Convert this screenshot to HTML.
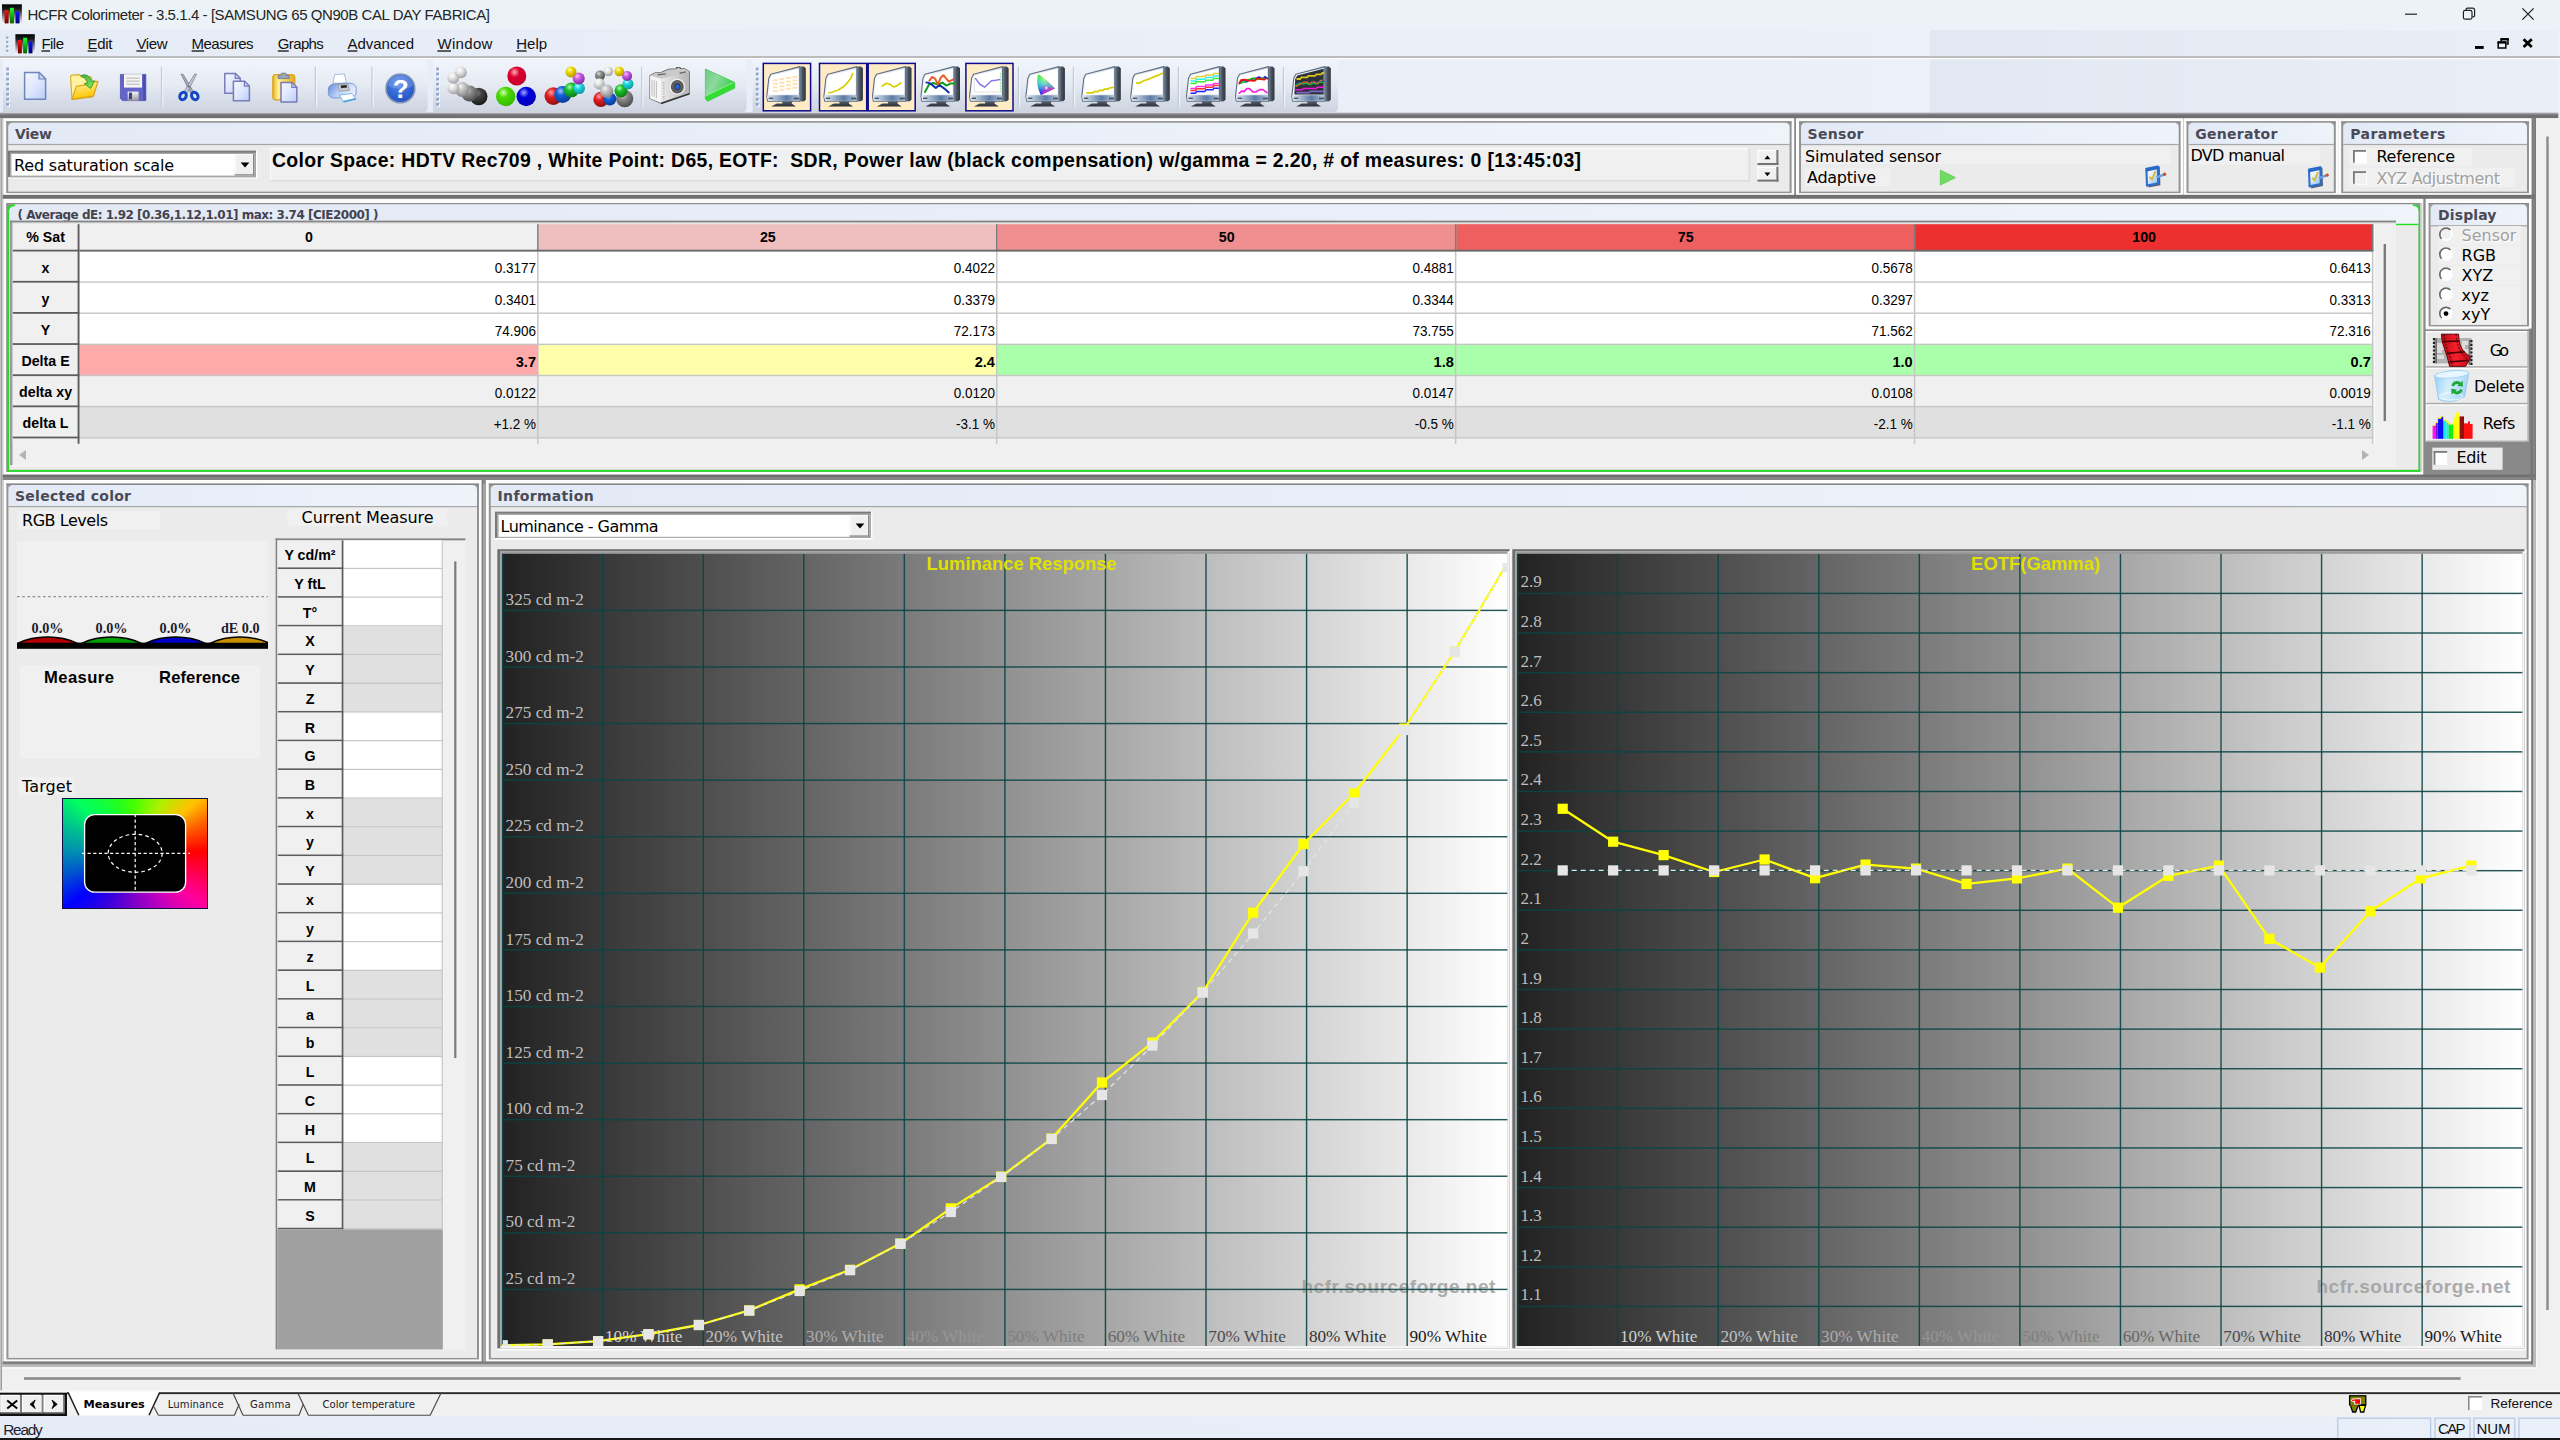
<!DOCTYPE html>
<html lang="en"><head><meta charset="utf-8"><title>HCFR Colorimeter - 3.5.1.4 - [SAMSUNG 65 QN90B CAL DAY FABRICA]</title>
<style>
html,body{margin:0;padding:0;background:#f0f0f0;}
body{width:2560px;height:1440px;overflow:hidden;position:relative;font-family:"Liberation Sans",sans-serif;}
#app{position:absolute;left:0;top:0;width:2560px;height:1440px;overflow:hidden;}
svg{position:absolute;left:0;top:0;}
text{white-space:pre;}
</style></head><body><div id="app">
<svg width="2560" height="1440" viewBox="0 0 2560 1440">
<defs>
<linearGradient id="hdr" x1="0" x2="1" y1="0" y2="0"><stop offset="0" stop-color="#e3eaf6"/><stop offset="1" stop-color="#eff4fb"/></linearGradient>
<linearGradient id="menubg" x1="0" x2="1" y1="0" y2="0"><stop offset="0" stop-color="#e6ecf6"/><stop offset="1" stop-color="#eef2f9"/></linearGradient>
<linearGradient id="menubg2" x1="0" x2="1" y1="0" y2="0"><stop offset="0" stop-color="#e2e8f1"/><stop offset="1" stop-color="#e9eef7"/></linearGradient>
<linearGradient id="tbg" x1="0" x2="0" y1="0" y2="1"><stop offset="0" stop-color="#f1f5fb"/><stop offset="0.45" stop-color="#e6ebf4"/><stop offset="1" stop-color="#cdd4e0"/></linearGradient>
<linearGradient id="topband" x1="0" x2="0" y1="0" y2="1" gradientUnits="userSpaceOnUse"><stop offset="0.0787" stop-color="#9a9da4"/><stop offset="0.0812" stop-color="#707070"/></linearGradient>
<clipPath id="clipRGB"><rect x="17" y="600" width="251" height="50"/></clipPath>
<linearGradient id="cg" x1="0" x2="1" y1="0" y2="0"><stop offset="0" stop-color="#222222"/><stop offset="1" stop-color="#ffffff"/></linearGradient>
<clipPath id="clipL"><rect x="502" y="553.8" width="1005.6" height="792.2"/></clipPath>
<clipPath id="clipR"><rect x="1517" y="553.8" width="1005.6" height="792.2"/></clipPath>
<linearGradient id="appbg" x1="0" x2="0" y1="0" y2="1"><stop offset="0" stop-color="#000"/><stop offset="0.25" stop-color="#1c1c1c"/><stop offset="1" stop-color="#ffffff"/></linearGradient>
<linearGradient id="barR" x1="0" x2="0" y1="0" y2="1"><stop offset="0" stop-color="#ff1010"/><stop offset="1" stop-color="#6a0000"/></linearGradient>
<linearGradient id="barG" x1="0" x2="0" y1="0" y2="1"><stop offset="0" stop-color="#20ff20"/><stop offset="1" stop-color="#006400"/></linearGradient>
<linearGradient id="barB" x1="0" x2="0" y1="0" y2="1"><stop offset="0" stop-color="#1010ff"/><stop offset="1" stop-color="#00007a"/></linearGradient>
<linearGradient id="pg" x1="0" y1="0" x2="1" y2="1"><stop offset="0" stop-color="#f6f8ff"/><stop offset="0.5" stop-color="#dfe7fd"/><stop offset="1" stop-color="#b9cdf8"/></linearGradient>
<linearGradient id="fold" x1="0" y1="0" x2="0.3" y2="1"><stop offset="0" stop-color="#fff6a8"/><stop offset="1" stop-color="#ffc400"/></linearGradient>
<linearGradient id="clipb" x1="0" y1="0" x2="1" y2="0"><stop offset="0" stop-color="#e8b030"/><stop offset="0.25" stop-color="#fff490"/><stop offset="1" stop-color="#e8a820"/></linearGradient>
<linearGradient id="garrow" x1="0" y1="0" x2="1" y2="1"><stop offset="0" stop-color="#3aa83a"/><stop offset="1" stop-color="#8cf060"/></linearGradient>
<linearGradient id="prn" x1="0" y1="0" x2="1" y2="0.4"><stop offset="0" stop-color="#5d86d6"/><stop offset="0.5" stop-color="#b9cdf6"/><stop offset="1" stop-color="#e6eefc"/></linearGradient>
<radialGradient id="helpg" cx="0.45" cy="0.3" r="0.8"><stop offset="0" stop-color="#5a8ae8"/><stop offset="0.6" stop-color="#2f63cf"/><stop offset="1" stop-color="#2450b8"/></radialGradient>
<linearGradient id="playg" x1="0" y1="0" x2="1" y2="0.5"><stop offset="0" stop-color="#66c882"/><stop offset="0.45" stop-color="#8edaa0"/><stop offset="1" stop-color="#3fd04f"/></linearGradient>
<linearGradient id="camf" x1="0" y1="0" x2="1" y2="0"><stop offset="0" stop-color="#ececec"/><stop offset="1" stop-color="#b4b4b4"/></linearGradient>
<linearGradient id="cam" x1="0" y1="0" x2="0" y2="1"><stop offset="0" stop-color="#f4f4f4"/><stop offset="1" stop-color="#9a9a9a"/></linearGradient>
<linearGradient id="cfgi" x1="0" y1="0" x2="0.8" y2="1"><stop offset="0" stop-color="#ffffff"/><stop offset="0.45" stop-color="#e6f2fd"/><stop offset="1" stop-color="#8cc4f6"/></linearGradient>
<radialGradient id="sR" cx="0.38" cy="0.3" r="0.75"><stop offset="0" stop-color="#ffb0b8"/><stop offset="0.35" stop-color="#dc0030"/><stop offset="1" stop-color="#c00028"/></radialGradient>
<radialGradient id="sG" cx="0.38" cy="0.3" r="0.75"><stop offset="0" stop-color="#d0ffb0"/><stop offset="0.35" stop-color="#48d800"/><stop offset="1" stop-color="#34b800"/></radialGradient>
<radialGradient id="sB" cx="0.38" cy="0.3" r="0.75"><stop offset="0" stop-color="#a0a8ff"/><stop offset="0.35" stop-color="#0000dc"/><stop offset="1" stop-color="#0000b4"/></radialGradient>
<radialGradient id="sW" cx="0.38" cy="0.3" r="0.75"><stop offset="0" stop-color="#ffffff"/><stop offset="0.35" stop-color="#e6e6e6"/><stop offset="1" stop-color="#9a9a9a"/></radialGradient>
<radialGradient id="sL" cx="0.38" cy="0.3" r="0.75"><stop offset="0" stop-color="#f4f4f4"/><stop offset="0.35" stop-color="#c6c6c6"/><stop offset="1" stop-color="#7e7e7e"/></radialGradient>
<radialGradient id="sK" cx="0.38" cy="0.3" r="0.75"><stop offset="0" stop-color="#8a8a8a"/><stop offset="0.35" stop-color="#444444"/><stop offset="1" stop-color="#141414"/></radialGradient>
<radialGradient id="sD" cx="0.38" cy="0.3" r="0.75"><stop offset="0" stop-color="#d8d8d8"/><stop offset="0.35" stop-color="#8a8a8a"/><stop offset="1" stop-color="#484848"/></radialGradient>
<radialGradient id="sY" cx="0.38" cy="0.3" r="0.75"><stop offset="0" stop-color="#ffffc0"/><stop offset="0.35" stop-color="#f0d800"/><stop offset="1" stop-color="#b09000"/></radialGradient>
<radialGradient id="sM" cx="0.38" cy="0.3" r="0.75"><stop offset="0" stop-color="#ffc0ff"/><stop offset="0.35" stop-color="#c860e0"/><stop offset="1" stop-color="#8020a0"/></radialGradient>
<radialGradient id="sC" cx="0.38" cy="0.3" r="0.75"><stop offset="0" stop-color="#c0ffff"/><stop offset="0.35" stop-color="#20d8e0"/><stop offset="1" stop-color="#109098"/></radialGradient>
<radialGradient id="sR2" cx="0.38" cy="0.3" r="0.75"><stop offset="0" stop-color="#ffa0a0"/><stop offset="0.35" stop-color="#e02020"/><stop offset="1" stop-color="#8a0c0c"/></radialGradient>
<radialGradient id="sB2" cx="0.38" cy="0.3" r="0.75"><stop offset="0" stop-color="#a0c0ff"/><stop offset="0.35" stop-color="#1060d8"/><stop offset="1" stop-color="#083890"/></radialGradient>
<radialGradient id="sG2" cx="0.38" cy="0.3" r="0.75"><stop offset="0" stop-color="#b0ffb0"/><stop offset="0.35" stop-color="#18c028"/><stop offset="1" stop-color="#0a7814"/></radialGradient>
<linearGradient id="mside" x1="0" x2="1"><stop offset="0" stop-color="#7f93ad"/><stop offset="0.45" stop-color="#4a5460"/><stop offset="1" stop-color="#2e343c"/></linearGradient>
<linearGradient id="mbez" x1="0" x2="1"><stop offset="0" stop-color="#dfe7f1"/><stop offset="0.25" stop-color="#a9bbd1"/><stop offset="0.6" stop-color="#5b7ba4"/><stop offset="1" stop-color="#b5c4d8"/></linearGradient>
<linearGradient id="mfront" x1="0" x2="1"><stop offset="0" stop-color="#f4f7fb"/><stop offset="1" stop-color="#cfd9e6"/></linearGradient>
<linearGradient id="mstand" x1="0" x2="0" y1="0" y2="1"><stop offset="0" stop-color="#5a6470"/><stop offset="1" stop-color="#2c3138"/></linearGradient>
<linearGradient id="cieg" x1="0" y1="0" x2="1" y2="0.6"><stop offset="0" stop-color="#20e020"/><stop offset="0.45" stop-color="#f0ff60"/><stop offset="1" stop-color="#ff1010"/></linearGradient>
<linearGradient id="cieb" x1="0.3" y1="1" x2="0.5" y2="0"><stop offset="0" stop-color="#1010ff"/><stop offset="0.55" stop-color="#30d0ff" stop-opacity="0.7"/><stop offset="1" stop-color="#30ff80" stop-opacity="0"/></linearGradient>
<radialGradient id="ciew" cx="0.55" cy="0.62" r="0.3"><stop offset="0" stop-color="#ffffff"/><stop offset="1" stop-color="#ffffff" stop-opacity="0"/></radialGradient>
<linearGradient id="bin" x1="0" x2="1" y1="0" y2="0.3"><stop offset="0" stop-color="#8ccdf6"/><stop offset="0.5" stop-color="#d6eefc"/><stop offset="1" stop-color="#a6d8f8"/></linearGradient>
<linearGradient id="redfilm" x1="0" x2="1"><stop offset="0" stop-color="#c00814"/><stop offset="0.5" stop-color="#f4202c"/><stop offset="1" stop-color="#c80c18"/></linearGradient>
</defs>
<!-- p1_chrome -->
<rect x="0" y="0" width="2560" height="1440" fill="#f0f0f0" />
<rect x="0" y="0" width="2560" height="29.3" fill="#ebf3f8" />
<rect x="0" y="29" width="2560" height="84.4" fill="url(#menubg)" />
<rect x="1930" y="30" width="628.5" height="83.4" fill="url(#menubg2)" />
<rect x="0" y="56" width="2560" height="2" fill="#bcbcbc" />
<rect x="0" y="58" width="2560" height="1.4" fill="#fbfcfe" />
<path d="M3 60.3 L423.6 60.3 Q427.6 60.3 427.6 64.3 L427.6 108 Q427.6 112 423.6 112 L3 112 Z" fill="url(#tbg)"/><rect x="7.2" y="68.6" width="2.8" height="2.8" fill="#fbfcfe" /><rect x="6.2" y="67.6" width="2.8" height="2.8" fill="#8ea7cb" /><rect x="7.2" y="73.65" width="2.8" height="2.8" fill="#fbfcfe" /><rect x="6.2" y="72.65" width="2.8" height="2.8" fill="#8ea7cb" /><rect x="7.2" y="78.7" width="2.8" height="2.8" fill="#fbfcfe" /><rect x="6.2" y="77.7" width="2.8" height="2.8" fill="#8ea7cb" /><rect x="7.2" y="83.75" width="2.8" height="2.8" fill="#fbfcfe" /><rect x="6.2" y="82.75" width="2.8" height="2.8" fill="#8ea7cb" /><rect x="7.2" y="88.8" width="2.8" height="2.8" fill="#fbfcfe" /><rect x="6.2" y="87.8" width="2.8" height="2.8" fill="#8ea7cb" /><rect x="7.2" y="93.85" width="2.8" height="2.8" fill="#fbfcfe" /><rect x="6.2" y="92.85" width="2.8" height="2.8" fill="#8ea7cb" /><rect x="7.2" y="98.9" width="2.8" height="2.8" fill="#fbfcfe" /><rect x="6.2" y="97.9" width="2.8" height="2.8" fill="#8ea7cb" /><rect x="7.2" y="103.95" width="2.8" height="2.8" fill="#fbfcfe" /><rect x="6.2" y="102.95" width="2.8" height="2.8" fill="#8ea7cb" />
<path d="M433 60.3 L742.6 60.3 Q746.6 60.3 746.6 64.3 L746.6 108 Q746.6 112 742.6 112 L433 112 Z" fill="url(#tbg)"/><rect x="437.2" y="68.6" width="2.8" height="2.8" fill="#fbfcfe" /><rect x="436.2" y="67.6" width="2.8" height="2.8" fill="#8ea7cb" /><rect x="437.2" y="73.65" width="2.8" height="2.8" fill="#fbfcfe" /><rect x="436.2" y="72.65" width="2.8" height="2.8" fill="#8ea7cb" /><rect x="437.2" y="78.7" width="2.8" height="2.8" fill="#fbfcfe" /><rect x="436.2" y="77.7" width="2.8" height="2.8" fill="#8ea7cb" /><rect x="437.2" y="83.75" width="2.8" height="2.8" fill="#fbfcfe" /><rect x="436.2" y="82.75" width="2.8" height="2.8" fill="#8ea7cb" /><rect x="437.2" y="88.8" width="2.8" height="2.8" fill="#fbfcfe" /><rect x="436.2" y="87.8" width="2.8" height="2.8" fill="#8ea7cb" /><rect x="437.2" y="93.85" width="2.8" height="2.8" fill="#fbfcfe" /><rect x="436.2" y="92.85" width="2.8" height="2.8" fill="#8ea7cb" /><rect x="437.2" y="98.9" width="2.8" height="2.8" fill="#fbfcfe" /><rect x="436.2" y="97.9" width="2.8" height="2.8" fill="#8ea7cb" /><rect x="437.2" y="103.95" width="2.8" height="2.8" fill="#fbfcfe" /><rect x="436.2" y="102.95" width="2.8" height="2.8" fill="#8ea7cb" />
<path d="M752.6 60.3 L1334 60.3 Q1338 60.3 1338 64.3 L1338 108 Q1338 112 1334 112 L752.6 112 Z" fill="url(#tbg)"/><rect x="756.8" y="68.6" width="2.8" height="2.8" fill="#fbfcfe" /><rect x="755.8" y="67.6" width="2.8" height="2.8" fill="#8ea7cb" /><rect x="756.8" y="73.65" width="2.8" height="2.8" fill="#fbfcfe" /><rect x="755.8" y="72.65" width="2.8" height="2.8" fill="#8ea7cb" /><rect x="756.8" y="78.7" width="2.8" height="2.8" fill="#fbfcfe" /><rect x="755.8" y="77.7" width="2.8" height="2.8" fill="#8ea7cb" /><rect x="756.8" y="83.75" width="2.8" height="2.8" fill="#fbfcfe" /><rect x="755.8" y="82.75" width="2.8" height="2.8" fill="#8ea7cb" /><rect x="756.8" y="88.8" width="2.8" height="2.8" fill="#fbfcfe" /><rect x="755.8" y="87.8" width="2.8" height="2.8" fill="#8ea7cb" /><rect x="756.8" y="93.85" width="2.8" height="2.8" fill="#fbfcfe" /><rect x="755.8" y="92.85" width="2.8" height="2.8" fill="#8ea7cb" /><rect x="756.8" y="98.9" width="2.8" height="2.8" fill="#fbfcfe" /><rect x="755.8" y="97.9" width="2.8" height="2.8" fill="#8ea7cb" /><rect x="756.8" y="103.95" width="2.8" height="2.8" fill="#fbfcfe" /><rect x="755.8" y="102.95" width="2.8" height="2.8" fill="#8ea7cb" />
<rect x="6.9" y="37.3" width="2.3" height="2.3" fill="#fbfcfe" />
<rect x="6" y="36.4" width="2.4" height="2.4" fill="#98afd0" />
<rect x="6.9" y="41.7" width="2.3" height="2.3" fill="#fbfcfe" />
<rect x="6" y="40.8" width="2.4" height="2.4" fill="#98afd0" />
<rect x="6.9" y="46.1" width="2.3" height="2.3" fill="#fbfcfe" />
<rect x="6" y="45.2" width="2.4" height="2.4" fill="#98afd0" />
<rect x="6.9" y="50.5" width="2.3" height="2.3" fill="#fbfcfe" />
<rect x="6" y="49.6" width="2.4" height="2.4" fill="#98afd0" />
<rect x="160.9" y="67" width="1.4" height="40" fill="#c3ccda" />
<rect x="162.3" y="67" width="1" height="40" fill="#f4f7fb" />
<rect x="314.7" y="67" width="1.4" height="40" fill="#c3ccda" />
<rect x="316.1" y="67" width="1" height="40" fill="#f4f7fb" />
<rect x="371.3" y="67" width="1.4" height="40" fill="#c3ccda" />
<rect x="372.7" y="67" width="1" height="40" fill="#f4f7fb" />
<rect x="641" y="67" width="1.4" height="40" fill="#c3ccda" />
<rect x="642.4" y="67" width="1" height="40" fill="#f4f7fb" />
<rect x="1017.8" y="67" width="1.4" height="40" fill="#c3ccda" />
<rect x="1019.2" y="67" width="1" height="40" fill="#f4f7fb" />
<rect x="1072.8" y="67" width="1.4" height="40" fill="#c3ccda" />
<rect x="1074.2" y="67" width="1" height="40" fill="#f4f7fb" />
<rect x="1177.8" y="67" width="1.4" height="40" fill="#c3ccda" />
<rect x="1179.2" y="67" width="1" height="40" fill="#f4f7fb" />
<rect x="1282.8" y="67" width="1.4" height="40" fill="#c3ccda" />
<rect x="1284.2" y="67" width="1" height="40" fill="#f4f7fb" />
<rect x="0" y="112.7" width="2558.4" height="1.7" fill="#9b9da2" />
<rect x="0" y="114.2" width="2536" height="1252.8" fill="#717171" />
<rect x="0" y="118.3" width="2536" height="1248.7" fill="#898989" />
<rect x="0" y="118.3" width="2.6" height="1272.7" fill="#fbfbfb" />
<rect x="0.4" y="118.3" width="1.5" height="1272.7" fill="#9a9a9a" />
<rect x="2536" y="114.2" width="22.3" height="4" fill="#717171" />
<rect x="2536" y="118.2" width="24" height="1272.8" fill="#f0f0f0" />
<rect x="2546.3" y="136.5" width="2.4" height="1173.5" fill="#8b8b8b" />
<rect x="0" y="1367" width="2560" height="24.6" fill="#f0f0f0" />
<rect x="0.5" y="1367" width="1.5" height="24" fill="#9a9a9a" />
<rect x="24" y="1377.2" width="2436.6" height="2.6" fill="#8b8b8b" />
<rect x="2.6" y="194.7" width="2533.4" height="4.05" fill="#707070" />
<rect x="2.6" y="474.6" width="2533.4" height="2.8" fill="#6f6f6f" />
<rect x="2.6" y="477.2" width="2533.4" height="2.8" fill="#858585" />
<rect x="2.6" y="1361.8" width="2530.5" height="2.5" fill="#808080" />
<rect x="2.6" y="1364.3" width="2533.3" height="2.9" fill="#bcbcbc" />
<rect x="2.6" y="1367.2" width="2534.2" height="1.5" fill="#fafafa" />
<rect x="2530.4" y="118.3" width="2.8" height="1245.9" fill="#787878" />
<rect x="2534.6" y="118.3" width="1.4" height="361.7" fill="#7a7a7a" />
<rect x="2533.1" y="480" width="2.8" height="887.2" fill="#bababa" />
<rect x="2535.9" y="480" width="0.9" height="888.7" fill="#fafafa" />
<rect x="480.4" y="480" width="2.5" height="881.2" fill="#7a7a7a" />
<rect x="482.9" y="484" width="2.1" height="877.2" fill="#a6a6a6" />
<rect x="3.2" y="118.2" width="1791" height="76.6" fill="#fcfcfc" />
<rect x="6.2" y="121.4" width="1785.4" height="71.7" fill="#939393" />
<rect x="6.2" y="121.4" width="1785.4" height="1.45" fill="#878787" />
<rect x="8.2" y="122.85" width="1781.4" height="68.8" fill="#ebebeb" />
<rect x="8.2" y="122.85" width="1781.4" height="21.05" fill="#8a8a8a" />
<path d="M8.2 143.9 L8.2 127.45 Q8.2 122.85 12.8 122.85 L1785 122.85 Q1789.6 122.85 1789.6 127.45 L1789.6 143.9 Z" fill="url(#hdr)"/>
<rect x="8.2" y="143.9" width="1781.4" height="1.2" fill="#a6a6a6" />
<text x="15" y="138.6" font-family='"DejaVu Sans", "Liberation Sans", sans-serif' font-size="14" font-weight="bold" fill="#4a4a57" text-anchor="start" textLength="37" lengthAdjust="spacing" >View</text>
<rect x="1796" y="118.2" width="387.2" height="76.6" fill="#fcfcfc" />
<rect x="1799" y="121.4" width="381.6" height="71.7" fill="#939393" />
<rect x="1799" y="121.4" width="381.6" height="1.45" fill="#878787" />
<rect x="1801" y="122.85" width="377.6" height="68.8" fill="#ebebeb" />
<rect x="1801" y="122.85" width="377.6" height="21.05" fill="#8a8a8a" />
<path d="M1801 143.9 L1801 127.45 Q1801 122.85 1805.6 122.85 L2174 122.85 Q2178.6 122.85 2178.6 127.45 L2178.6 143.9 Z" fill="url(#hdr)"/>
<rect x="1801" y="143.9" width="377.6" height="1.2" fill="#a6a6a6" />
<text x="1807.5" y="138.6" font-family='"DejaVu Sans", "Liberation Sans", sans-serif' font-size="14" font-weight="bold" fill="#4a4a57" text-anchor="start" textLength="56" lengthAdjust="spacing" >Sensor</text>
<rect x="2183.5" y="118.2" width="154.9" height="76.6" fill="#fcfcfc" />
<rect x="2186.5" y="121.4" width="149.3" height="71.7" fill="#939393" />
<rect x="2186.5" y="121.4" width="149.3" height="1.45" fill="#878787" />
<rect x="2188.5" y="122.85" width="145.3" height="68.8" fill="#ebebeb" />
<rect x="2188.5" y="122.85" width="145.3" height="21.05" fill="#8a8a8a" />
<path d="M2188.5 143.9 L2188.5 127.45 Q2188.5 122.85 2193.1 122.85 L2329.2 122.85 Q2333.8 122.85 2333.8 127.45 L2333.8 143.9 Z" fill="url(#hdr)"/>
<rect x="2188.5" y="143.9" width="145.3" height="1.2" fill="#a6a6a6" />
<text x="2195.2" y="138.6" font-family='"DejaVu Sans", "Liberation Sans", sans-serif' font-size="14" font-weight="bold" fill="#4a4a57" text-anchor="start" textLength="82.2" lengthAdjust="spacing" >Generator</text>
<rect x="2338.2" y="118.2" width="193.4" height="76.6" fill="#fcfcfc" />
<rect x="2341.2" y="121.4" width="187.8" height="71.7" fill="#939393" />
<rect x="2341.2" y="121.4" width="187.8" height="1.45" fill="#878787" />
<rect x="2343.2" y="122.85" width="183.8" height="68.8" fill="#ebebeb" />
<rect x="2343.2" y="122.85" width="183.8" height="21.05" fill="#8a8a8a" />
<path d="M2343.2 143.9 L2343.2 127.45 Q2343.2 122.85 2347.8 122.85 L2522.4 122.85 Q2527 122.85 2527 127.45 L2527 143.9 Z" fill="url(#hdr)"/>
<rect x="2343.2" y="143.9" width="183.8" height="1.2" fill="#a6a6a6" />
<text x="2350.3" y="138.6" font-family='"DejaVu Sans", "Liberation Sans", sans-serif' font-size="14" font-weight="bold" fill="#4a4a57" text-anchor="start" textLength="95" lengthAdjust="spacing" >Parameters</text>
<!-- p2_grid -->
<rect x="3.2" y="198.8" width="2420.1" height="275.7" fill="#fbfbfb" />
<rect x="6.2" y="203" width="2414.2" height="268.8" fill="#8a8a8a" />
<rect x="7.1" y="206" width="2" height="265.8" fill="#22df22" />
<rect x="7.1" y="469.8" width="2413.3" height="2" fill="#22df22" />
<rect x="2418.4" y="209.5" width="2" height="262.3" fill="#22df22" />
<rect x="2420.4" y="203" width="2" height="268.8" fill="#d4d4d4" />
<rect x="9.1" y="204.3" width="2409.3" height="265.5" fill="#ebebeb" />
<rect x="9.1" y="204.3" width="2409.3" height="19.6" fill="#898989" />
<path d="M9.1 223.9 L9.1 210.3 Q9.1 204.3 15.1 204.3 L2412.4 204.3 Q2418.4 204.3 2418.4 210.3 L2418.4 223.9 Z" fill="url(#hdr)"/>
<path d="M8.1 212.3 Q8.1 205.1 15.1 205.1" fill="none" stroke="#22df22" stroke-width="1.6"/>
<path d="M2412.9 205.1 Q2419.4 205.1 2419.4 210.8" fill="none" stroke="#22df22" stroke-width="1.6"/>
<rect x="2396" y="223.75" width="22.4" height="1.45" fill="#22df22" />
<text x="17.5" y="218.6" font-family='"DejaVu Sans", "Liberation Sans", sans-serif' font-size="12" font-weight="bold" fill="#43434f" text-anchor="start" textLength="361" lengthAdjust="spacing" >( Average dE: 1.92 [0.36,1.12,1.01] max: 3.74 [CIE2000] )</text>
<rect x="10.2" y="220.6" width="2385.8" height="244.8" fill="#f0f0f0" />
<rect x="10.2" y="220.6" width="2385.8" height="1.6" fill="#848484" />
<rect x="10.2" y="222.2" width="2385.8" height="1" fill="#b9b9b9" />
<rect x="10.2" y="220.6" width="1.6" height="244.8" fill="#848484" />
<rect x="11.8" y="222.2" width="1" height="243.2" fill="#b9b9b9" />
<rect x="2373.2" y="224.2" width="1.6" height="219.6" fill="#fdfdfd" />
<rect x="79.3" y="224.2" width="459.1" height="27.1" fill="#f0f0f0" />
<rect x="538.4" y="224.2" width="458.9" height="27.1" fill="#efbfbf" />
<rect x="997.3" y="224.2" width="458.9" height="27.1" fill="#ef8f8f" />
<rect x="1456.2" y="224.2" width="458.9" height="27.1" fill="#ee5f5f" />
<rect x="1915.1" y="224.2" width="458.1" height="27.1" fill="#ee2f2f" />
<rect x="79.3" y="251.3" width="459.1" height="31.15" fill="#ffffff" />
<rect x="538.4" y="251.3" width="458.9" height="31.15" fill="#ffffff" />
<rect x="997.3" y="251.3" width="458.9" height="31.15" fill="#ffffff" />
<rect x="1456.2" y="251.3" width="458.9" height="31.15" fill="#ffffff" />
<rect x="1915.1" y="251.3" width="458.1" height="31.15" fill="#ffffff" />
<rect x="79.3" y="282.45" width="459.1" height="31.15" fill="#ffffff" />
<rect x="538.4" y="282.45" width="458.9" height="31.15" fill="#ffffff" />
<rect x="997.3" y="282.45" width="458.9" height="31.15" fill="#ffffff" />
<rect x="1456.2" y="282.45" width="458.9" height="31.15" fill="#ffffff" />
<rect x="1915.1" y="282.45" width="458.1" height="31.15" fill="#ffffff" />
<rect x="79.3" y="313.6" width="459.1" height="31.15" fill="#ffffff" />
<rect x="538.4" y="313.6" width="458.9" height="31.15" fill="#ffffff" />
<rect x="997.3" y="313.6" width="458.9" height="31.15" fill="#ffffff" />
<rect x="1456.2" y="313.6" width="458.9" height="31.15" fill="#ffffff" />
<rect x="1915.1" y="313.6" width="458.1" height="31.15" fill="#ffffff" />
<rect x="79.3" y="344.75" width="459.1" height="31.15" fill="#ffaaaa" />
<rect x="538.4" y="344.75" width="458.9" height="31.15" fill="#ffffaa" />
<rect x="997.3" y="344.75" width="458.9" height="31.15" fill="#aaffaa" />
<rect x="1456.2" y="344.75" width="458.9" height="31.15" fill="#aaffaa" />
<rect x="1915.1" y="344.75" width="458.1" height="31.15" fill="#aaffaa" />
<rect x="79.3" y="375.9" width="459.1" height="31.15" fill="#f0f0f0" />
<rect x="538.4" y="375.9" width="458.9" height="31.15" fill="#f0f0f0" />
<rect x="997.3" y="375.9" width="458.9" height="31.15" fill="#f0f0f0" />
<rect x="1456.2" y="375.9" width="458.9" height="31.15" fill="#f0f0f0" />
<rect x="1915.1" y="375.9" width="458.1" height="31.15" fill="#f0f0f0" />
<rect x="79.3" y="407.05" width="459.1" height="31.15" fill="#e0e0e0" />
<rect x="538.4" y="407.05" width="458.9" height="31.15" fill="#e0e0e0" />
<rect x="997.3" y="407.05" width="458.9" height="31.15" fill="#e0e0e0" />
<rect x="1456.2" y="407.05" width="458.9" height="31.15" fill="#e0e0e0" />
<rect x="1915.1" y="407.05" width="458.1" height="31.15" fill="#e0e0e0" />
<rect x="79.3" y="438.2" width="2293.9" height="5.6" fill="#f0f0f0" />
<rect x="79.3" y="250.2" width="2293.9" height="1.4" fill="#c6c6c6" />
<rect x="79.3" y="281.35" width="2293.9" height="1.4" fill="#c6c6c6" />
<rect x="79.3" y="312.5" width="2293.9" height="1.4" fill="#c6c6c6" />
<rect x="79.3" y="343.65" width="2293.9" height="1.4" fill="#c6c6c6" />
<rect x="79.3" y="374.8" width="2293.9" height="1.4" fill="#c6c6c6" />
<rect x="79.3" y="405.95" width="2293.9" height="1.4" fill="#c6c6c6" />
<rect x="79.3" y="437.1" width="2293.9" height="1.4" fill="#c6c6c6" />
<rect x="537.1" y="251.3" width="1.5" height="192.5" fill="#c6c6c6" />
<rect x="537.1" y="224.2" width="1.5" height="27.1" fill="#7d7d7d" />
<rect x="996" y="251.3" width="1.5" height="192.5" fill="#c6c6c6" />
<rect x="996" y="224.2" width="1.5" height="27.1" fill="#7d7d7d" />
<rect x="1454.9" y="251.3" width="1.5" height="192.5" fill="#c6c6c6" />
<rect x="1454.9" y="224.2" width="1.5" height="27.1" fill="#7d7d7d" />
<rect x="1913.8" y="251.3" width="1.5" height="192.5" fill="#c6c6c6" />
<rect x="1913.8" y="224.2" width="1.5" height="27.1" fill="#7d7d7d" />
<rect x="2371.9" y="251.3" width="1.5" height="192.5" fill="#c6c6c6" />
<rect x="2371.9" y="224.2" width="1.5" height="27.1" fill="#7d7d7d" />
<rect x="79.3" y="249.7" width="2293.9" height="1.8" fill="#6b6b6b" />
<rect x="12.8" y="224.2" width="66.5" height="219.6" fill="#f0f0f0" />
<rect x="12.8" y="249.7" width="66.5" height="1.8" fill="#5d5d5d" />
<rect x="12.8" y="280.85" width="66.5" height="1.8" fill="#5d5d5d" />
<rect x="12.8" y="312" width="66.5" height="1.8" fill="#5d5d5d" />
<rect x="12.8" y="343.15" width="66.5" height="1.8" fill="#5d5d5d" />
<rect x="12.8" y="374.3" width="66.5" height="1.8" fill="#5d5d5d" />
<rect x="12.8" y="405.45" width="66.5" height="1.8" fill="#5d5d5d" />
<rect x="12.8" y="436.6" width="66.5" height="1.8" fill="#5d5d5d" />
<rect x="77.6" y="224.2" width="1.9" height="219.6" fill="#5d5d5d" />
<text transform="translate(45.55 242) scale(0.95 1)" font-family='"Liberation Sans", sans-serif' font-size="15" font-weight="bold" fill="#000" text-anchor="middle" >% Sat</text>
<text transform="translate(308.85 242) scale(0.95 1)" font-family='"Liberation Sans", sans-serif' font-size="15" font-weight="bold" fill="#000" text-anchor="middle" >0</text>
<text transform="translate(767.85 242) scale(0.95 1)" font-family='"Liberation Sans", sans-serif' font-size="15" font-weight="bold" fill="#000" text-anchor="middle" >25</text>
<text transform="translate(1226.75 242) scale(0.95 1)" font-family='"Liberation Sans", sans-serif' font-size="15" font-weight="bold" fill="#000" text-anchor="middle" >50</text>
<text transform="translate(1685.65 242) scale(0.95 1)" font-family='"Liberation Sans", sans-serif' font-size="15" font-weight="bold" fill="#000" text-anchor="middle" >75</text>
<text transform="translate(2144.15 242) scale(0.95 1)" font-family='"Liberation Sans", sans-serif' font-size="15" font-weight="bold" fill="#000" text-anchor="middle" >100</text>
<text transform="translate(45.55 272.55) scale(0.95 1)" font-family='"Liberation Sans", sans-serif' font-size="15" font-weight="bold" fill="#000" text-anchor="middle" >x</text>
<text transform="translate(536 273.45) scale(0.9 1)" font-family='"Liberation Sans", sans-serif' font-size="15" font-weight="normal" fill="#000" text-anchor="end" >0.3177</text>
<text transform="translate(994.9 273.45) scale(0.9 1)" font-family='"Liberation Sans", sans-serif' font-size="15" font-weight="normal" fill="#000" text-anchor="end" >0.4022</text>
<text transform="translate(1453.8 273.45) scale(0.9 1)" font-family='"Liberation Sans", sans-serif' font-size="15" font-weight="normal" fill="#000" text-anchor="end" >0.4881</text>
<text transform="translate(1912.7 273.45) scale(0.9 1)" font-family='"Liberation Sans", sans-serif' font-size="15" font-weight="normal" fill="#000" text-anchor="end" >0.5678</text>
<text transform="translate(2370.8 273.45) scale(0.9 1)" font-family='"Liberation Sans", sans-serif' font-size="15" font-weight="normal" fill="#000" text-anchor="end" >0.6413</text>
<text transform="translate(45.55 303.7) scale(0.95 1)" font-family='"Liberation Sans", sans-serif' font-size="15" font-weight="bold" fill="#000" text-anchor="middle" >y</text>
<text transform="translate(536 304.6) scale(0.9 1)" font-family='"Liberation Sans", sans-serif' font-size="15" font-weight="normal" fill="#000" text-anchor="end" >0.3401</text>
<text transform="translate(994.9 304.6) scale(0.9 1)" font-family='"Liberation Sans", sans-serif' font-size="15" font-weight="normal" fill="#000" text-anchor="end" >0.3379</text>
<text transform="translate(1453.8 304.6) scale(0.9 1)" font-family='"Liberation Sans", sans-serif' font-size="15" font-weight="normal" fill="#000" text-anchor="end" >0.3344</text>
<text transform="translate(1912.7 304.6) scale(0.9 1)" font-family='"Liberation Sans", sans-serif' font-size="15" font-weight="normal" fill="#000" text-anchor="end" >0.3297</text>
<text transform="translate(2370.8 304.6) scale(0.9 1)" font-family='"Liberation Sans", sans-serif' font-size="15" font-weight="normal" fill="#000" text-anchor="end" >0.3313</text>
<text transform="translate(45.55 334.85) scale(0.95 1)" font-family='"Liberation Sans", sans-serif' font-size="15" font-weight="bold" fill="#000" text-anchor="middle" >Y</text>
<text transform="translate(536 335.75) scale(0.9 1)" font-family='"Liberation Sans", sans-serif' font-size="15" font-weight="normal" fill="#000" text-anchor="end" >74.906</text>
<text transform="translate(994.9 335.75) scale(0.9 1)" font-family='"Liberation Sans", sans-serif' font-size="15" font-weight="normal" fill="#000" text-anchor="end" >72.173</text>
<text transform="translate(1453.8 335.75) scale(0.9 1)" font-family='"Liberation Sans", sans-serif' font-size="15" font-weight="normal" fill="#000" text-anchor="end" >73.755</text>
<text transform="translate(1912.7 335.75) scale(0.9 1)" font-family='"Liberation Sans", sans-serif' font-size="15" font-weight="normal" fill="#000" text-anchor="end" >71.562</text>
<text transform="translate(2370.8 335.75) scale(0.9 1)" font-family='"Liberation Sans", sans-serif' font-size="15" font-weight="normal" fill="#000" text-anchor="end" >72.316</text>
<text transform="translate(45.55 366) scale(0.95 1)" font-family='"Liberation Sans", sans-serif' font-size="15" font-weight="bold" fill="#000" text-anchor="middle" >Delta E</text>
<text transform="translate(536 366.9) scale(0.97 1)" font-family='"Liberation Sans", sans-serif' font-size="15" font-weight="bold" fill="#000" text-anchor="end" >3.7</text>
<text transform="translate(994.9 366.9) scale(0.97 1)" font-family='"Liberation Sans", sans-serif' font-size="15" font-weight="bold" fill="#000" text-anchor="end" >2.4</text>
<text transform="translate(1453.8 366.9) scale(0.97 1)" font-family='"Liberation Sans", sans-serif' font-size="15" font-weight="bold" fill="#000" text-anchor="end" >1.8</text>
<text transform="translate(1912.7 366.9) scale(0.97 1)" font-family='"Liberation Sans", sans-serif' font-size="15" font-weight="bold" fill="#000" text-anchor="end" >1.0</text>
<text transform="translate(2370.8 366.9) scale(0.97 1)" font-family='"Liberation Sans", sans-serif' font-size="15" font-weight="bold" fill="#000" text-anchor="end" >0.7</text>
<text transform="translate(45.55 397.15) scale(0.95 1)" font-family='"Liberation Sans", sans-serif' font-size="15" font-weight="bold" fill="#000" text-anchor="middle" >delta xy</text>
<text transform="translate(536 398.05) scale(0.9 1)" font-family='"Liberation Sans", sans-serif' font-size="15" font-weight="normal" fill="#000" text-anchor="end" >0.0122</text>
<text transform="translate(994.9 398.05) scale(0.9 1)" font-family='"Liberation Sans", sans-serif' font-size="15" font-weight="normal" fill="#000" text-anchor="end" >0.0120</text>
<text transform="translate(1453.8 398.05) scale(0.9 1)" font-family='"Liberation Sans", sans-serif' font-size="15" font-weight="normal" fill="#000" text-anchor="end" >0.0147</text>
<text transform="translate(1912.7 398.05) scale(0.9 1)" font-family='"Liberation Sans", sans-serif' font-size="15" font-weight="normal" fill="#000" text-anchor="end" >0.0108</text>
<text transform="translate(2370.8 398.05) scale(0.9 1)" font-family='"Liberation Sans", sans-serif' font-size="15" font-weight="normal" fill="#000" text-anchor="end" >0.0019</text>
<text transform="translate(45.55 428.3) scale(0.95 1)" font-family='"Liberation Sans", sans-serif' font-size="15" font-weight="bold" fill="#000" text-anchor="middle" >delta L</text>
<text transform="translate(536 429.2) scale(0.9 1)" font-family='"Liberation Sans", sans-serif' font-size="15" font-weight="normal" fill="#000" text-anchor="end" >+1.2 %</text>
<text transform="translate(994.9 429.2) scale(0.9 1)" font-family='"Liberation Sans", sans-serif' font-size="15" font-weight="normal" fill="#000" text-anchor="end" >-3.1 %</text>
<text transform="translate(1453.8 429.2) scale(0.9 1)" font-family='"Liberation Sans", sans-serif' font-size="15" font-weight="normal" fill="#000" text-anchor="end" >-0.5 %</text>
<text transform="translate(1912.7 429.2) scale(0.9 1)" font-family='"Liberation Sans", sans-serif' font-size="15" font-weight="normal" fill="#000" text-anchor="end" >-2.1 %</text>
<text transform="translate(2370.8 429.2) scale(0.9 1)" font-family='"Liberation Sans", sans-serif' font-size="15" font-weight="normal" fill="#000" text-anchor="end" >-1.1 %</text>
<rect x="2383.6" y="244" width="2.4" height="177" fill="#7a7a7a" />
<path d="M19 455 L26 450 L26 460 Z" fill="#b4b4b4"/>
<path d="M2369 455 L2362 450 L2362 460 Z" fill="#b4b4b4"/>
<rect x="10.2" y="465.4" width="2385.8" height="1" fill="#fafafa" />
<rect x="2425.6" y="198.8" width="106" height="129.8" fill="#fcfcfc" />
<rect x="2428.6" y="203" width="100.4" height="123.4" fill="#939393" />
<rect x="2428.6" y="203" width="100.4" height="1.45" fill="#878787" />
<rect x="2430.6" y="204.45" width="96.4" height="120.5" fill="#ebebeb" />
<rect x="2430.6" y="204.45" width="96.4" height="20.75" fill="#8a8a8a" />
<path d="M2430.6 225.2 L2430.6 209.05 Q2430.6 204.45 2435.2 204.45 L2522.4 204.45 Q2527 204.45 2527 209.05 L2527 225.2 Z" fill="url(#hdr)"/>
<rect x="2430.6" y="225.2" width="96.4" height="1.2" fill="#a6a6a6" />
<text x="2438" y="220" font-family='"DejaVu Sans", "Liberation Sans", sans-serif' font-size="14" font-weight="bold" fill="#4a4a57" text-anchor="start" textLength="58.5" lengthAdjust="spacing" >Display</text>
<rect x="2438" y="226" width="83" height="19" fill="#f0f0f0" />
<text x="2462.6" y="242" font-family='"DejaVu Sans", "Liberation Sans", sans-serif' font-size="16" font-weight="normal" fill="#ffffff" text-anchor="start" >Sensor</text>
<text x="2461.6" y="241" font-family='"DejaVu Sans", "Liberation Sans", sans-serif' font-size="16" font-weight="normal" fill="#a0a0a0" text-anchor="start" >Sensor</text>
<circle cx="2446" cy="234.4" r="6.6" fill="#ffffff"/>
<path d="M2441.6 238.8 A6.2 6.2 0 0 1 2450.4 230" fill="none" stroke="#6a6a6a" stroke-width="1.7"/>
<circle cx="2446" cy="234.4" r="4.9" fill="#f0f0f0"/>
<rect x="2438" y="245.8" width="83" height="19" fill="#f0f0f0" />
<text x="2461.6" y="260.8" font-family='"DejaVu Sans", "Liberation Sans", sans-serif' font-size="16" font-weight="normal" fill="#000" text-anchor="start" >RGB</text>
<circle cx="2446" cy="254.2" r="6.6" fill="#ffffff"/>
<path d="M2441.6 258.6 A6.2 6.2 0 0 1 2450.4 249.8" fill="none" stroke="#6a6a6a" stroke-width="1.7"/>
<circle cx="2446" cy="254.2" r="4.9" fill="#ffffff"/>
<rect x="2438" y="266" width="83" height="19" fill="#f0f0f0" />
<text x="2461.6" y="281" font-family='"DejaVu Sans", "Liberation Sans", sans-serif' font-size="16" font-weight="normal" fill="#000" text-anchor="start" >XYZ</text>
<circle cx="2446" cy="274.4" r="6.6" fill="#ffffff"/>
<path d="M2441.6 278.8 A6.2 6.2 0 0 1 2450.4 270" fill="none" stroke="#6a6a6a" stroke-width="1.7"/>
<circle cx="2446" cy="274.4" r="4.9" fill="#ffffff"/>
<rect x="2438" y="286" width="83" height="19" fill="#f0f0f0" />
<text x="2461.6" y="301" font-family='"DejaVu Sans", "Liberation Sans", sans-serif' font-size="16" font-weight="normal" fill="#000" text-anchor="start" >xyz</text>
<circle cx="2446" cy="294.4" r="6.6" fill="#ffffff"/>
<path d="M2441.6 298.8 A6.2 6.2 0 0 1 2450.4 290" fill="none" stroke="#6a6a6a" stroke-width="1.7"/>
<circle cx="2446" cy="294.4" r="4.9" fill="#ffffff"/>
<rect x="2438" y="305.2" width="83" height="19" fill="#f0f0f0" />
<text x="2461.6" y="320.2" font-family='"DejaVu Sans", "Liberation Sans", sans-serif' font-size="16" font-weight="normal" fill="#000" text-anchor="start" >xyY</text>
<circle cx="2446" cy="313.6" r="6.6" fill="#ffffff"/>
<path d="M2441.6 318 A6.2 6.2 0 0 1 2450.4 309.2" fill="none" stroke="#6a6a6a" stroke-width="1.7"/>
<circle cx="2446" cy="313.6" r="4.9" fill="#ffffff"/>
<circle cx="2446" cy="313.6" r="2.4" fill="#000"/>
<rect x="2425.8" y="331" width="102.8" height="36.4" fill="#ebebeb" />
<rect x="2425.8" y="331" width="102.8" height="1.2" fill="#ffffff" />
<rect x="2425.8" y="331" width="1.2" height="36.4" fill="#ffffff" />
<rect x="2425.8" y="366.2" width="102.8" height="1.2" fill="#a9a9a9" />
<rect x="2527.4" y="331" width="1.2" height="36.4" fill="#a9a9a9" />
<text x="2489.7" y="355.7" font-family='"DejaVu Sans", "Liberation Sans", sans-serif' font-size="16" font-weight="normal" fill="#000" text-anchor="start" textLength="19.4" lengthAdjust="spacing" >Go</text>
<rect x="2425.8" y="367.8" width="102.8" height="36.2" fill="#ebebeb" />
<rect x="2425.8" y="367.8" width="102.8" height="1.2" fill="#ffffff" />
<rect x="2425.8" y="367.8" width="1.2" height="36.2" fill="#ffffff" />
<rect x="2425.8" y="402.8" width="102.8" height="1.2" fill="#a9a9a9" />
<rect x="2527.4" y="367.8" width="1.2" height="36.2" fill="#a9a9a9" />
<text x="2474" y="392.2" font-family='"DejaVu Sans", "Liberation Sans", sans-serif' font-size="16" font-weight="normal" fill="#000" text-anchor="start" textLength="50.6" lengthAdjust="spacing" >Delete</text>
<rect x="2425.8" y="404.4" width="102.8" height="37.4" fill="#ebebeb" />
<rect x="2425.8" y="404.4" width="102.8" height="1.2" fill="#ffffff" />
<rect x="2425.8" y="404.4" width="1.2" height="37.4" fill="#ffffff" />
<rect x="2425.8" y="440.6" width="102.8" height="1.2" fill="#a9a9a9" />
<rect x="2527.4" y="404.4" width="1.2" height="37.4" fill="#a9a9a9" />
<text x="2482.8" y="429.4" font-family='"DejaVu Sans", "Liberation Sans", sans-serif' font-size="16" font-weight="normal" fill="#000" text-anchor="start" textLength="32.6" lengthAdjust="spacing" >Refs</text>
<rect x="2425.8" y="328" width="102.8" height="1.4" fill="#f4f4f4" />
<rect x="2432.3" y="447.6" width="70.3" height="22.2" fill="#ebebeb" />
<rect x="2433.6" y="451" width="13.6" height="13.8" fill="#ffffff" />
<rect x="2433.6" y="451" width="13.6" height="1.8" fill="#7a7a7a" />
<rect x="2433.6" y="451" width="1.8" height="13.8" fill="#7a7a7a" />
<text x="2456.5" y="463" font-family='"DejaVu Sans", "Liberation Sans", sans-serif' font-size="16" font-weight="normal" fill="#000" text-anchor="start" textLength="30" lengthAdjust="spacing" >Edit</text>
<!-- p3_selcolor -->
<rect x="3.4" y="480" width="478.2" height="881.3" fill="#fcfcfc" />
<rect x="6.4" y="483.6" width="472.6" height="875.8" fill="#939393" />
<rect x="6.4" y="483.6" width="472.6" height="1.45" fill="#878787" />
<rect x="8.4" y="485.05" width="468.6" height="872.9" fill="#ebebeb" />
<rect x="8.4" y="485.05" width="468.6" height="20.95" fill="#8a8a8a" />
<path d="M8.4 506 L8.4 489.65 Q8.4 485.05 13 485.05 L472.4 485.05 Q477 485.05 477 489.65 L477 506 Z" fill="url(#hdr)"/>
<rect x="8.4" y="506" width="468.6" height="1.2" fill="#a6a6a6" />
<text x="15" y="501.4" font-family='"DejaVu Sans", "Liberation Sans", sans-serif' font-size="14" font-weight="bold" fill="#4a4a57" text-anchor="start" textLength="116" lengthAdjust="spacing" >Selected color</text>
<rect x="18" y="511" width="142" height="18.4" fill="#f0f0f0" />
<text x="22" y="526" font-family='"DejaVu Sans", "Liberation Sans", sans-serif' font-size="16" font-weight="normal" fill="#000" text-anchor="start" textLength="86" lengthAdjust="spacing" >RGB Levels</text>
<rect x="287.4" y="508.6" width="160" height="17.4" fill="#f0f0f0" />
<text x="301.6" y="523.3" font-family='"DejaVu Sans", "Liberation Sans", sans-serif' font-size="16" font-weight="normal" fill="#000" text-anchor="start" textLength="132" lengthAdjust="spacing" >Current Measure</text>
<rect x="17" y="541" width="251.4" height="108" fill="#f0f0f0" />
<line x1="17" y1="596.7" x2="268" y2="596.7" stroke="#8e8e8e" stroke-width="1.3" stroke-dasharray="2.6 2.6"/>
<rect x="17" y="642.6" width="251" height="6.2" fill="#000" />
<path d="M17.5 643.4 Q31.5 637 47.5 637.1 Q63.5 637 77.5 643.4 Z" fill="#b40000" stroke="#000" stroke-width="1.5" clip-path="url(#clipRGB)"/>
<path d="M81.5 643.4 Q95.5 637 111.5 637.1 Q127.5 637 141.5 643.4 Z" fill="#00a000" stroke="#000" stroke-width="1.5" clip-path="url(#clipRGB)"/>
<path d="M145.5 643.4 Q159.5 637 175.5 637.1 Q191.5 637 205.5 643.4 Z" fill="#0000c8" stroke="#000" stroke-width="1.5" clip-path="url(#clipRGB)"/>
<path d="M210 643.4 Q224 637 240 637.1 Q256 637 270 643.4 Z" fill="#c89000" stroke="#000" stroke-width="1.5" clip-path="url(#clipRGB)"/>
<text x="47.5" y="632.6" font-family='"Liberation Serif", serif' font-size="14.2" font-weight="bold" fill="#1c1c2c" text-anchor="middle" >0.0%</text>
<text x="111.5" y="632.6" font-family='"Liberation Serif", serif' font-size="14.2" font-weight="bold" fill="#1c1c2c" text-anchor="middle" >0.0%</text>
<text x="175.5" y="632.6" font-family='"Liberation Serif", serif' font-size="14.2" font-weight="bold" fill="#1c1c2c" text-anchor="middle" >0.0%</text>
<text x="240.3" y="632.6" font-family='"Liberation Serif", serif' font-size="14.2" font-weight="bold" fill="#1c1c2c" text-anchor="middle" >dE 0.0</text>
<rect x="20" y="665.6" width="240" height="92.8" fill="#f0f0f0" />
<text x="79" y="682.5" font-family='"Liberation Sans", sans-serif' font-size="16.6" font-weight="bold" fill="#000" text-anchor="middle" textLength="70" lengthAdjust="spacing" >Measure</text>
<text x="199.6" y="682.5" font-family='"Liberation Sans", sans-serif' font-size="16.6" font-weight="bold" fill="#000" text-anchor="middle" textLength="81" lengthAdjust="spacing" >Reference</text>
<rect x="18" y="777" width="56.4" height="18.2" fill="#f0f0f0" />
<text x="22" y="792" font-family='"DejaVu Sans", "Liberation Sans", sans-serif' font-size="16" font-weight="normal" fill="#000" text-anchor="start" textLength="50" lengthAdjust="spacing" >Target</text>
<rect x="275.6" y="538.4" width="189.8" height="811" fill="#f0f0f0" />
<rect x="275.6" y="538.4" width="189.8" height="1.6" fill="#848484" />
<rect x="275.6" y="538.4" width="1.6" height="811" fill="#848484" />
<rect x="277.2" y="540" width="188.2" height="0.8" fill="#c4c4c4" />
<rect x="277.8" y="540.4" width="65.6" height="28.71" fill="#f0f0f0" />
<rect x="343.4" y="540.4" width="99.4" height="28.71" fill="#ffffff" />
<rect x="277.8" y="567.41" width="65.6" height="1.7" fill="#5d5d5d" />
<rect x="343.4" y="567.81" width="99.4" height="1.3" fill="#c6c6c6" />
<text transform="translate(310 560.31) scale(0.95 1)" font-family='"Liberation Sans", sans-serif' font-size="15" font-weight="bold" fill="#000" text-anchor="middle" >Y cd/m²</text>
<rect x="277.8" y="569.11" width="65.6" height="28.71" fill="#f0f0f0" />
<rect x="343.4" y="569.11" width="99.4" height="28.71" fill="#ffffff" />
<rect x="277.8" y="596.12" width="65.6" height="1.7" fill="#5d5d5d" />
<rect x="343.4" y="596.52" width="99.4" height="1.3" fill="#c6c6c6" />
<text transform="translate(310 589.02) scale(0.95 1)" font-family='"Liberation Sans", sans-serif' font-size="15" font-weight="bold" fill="#000" text-anchor="middle" >Y ftL</text>
<rect x="277.8" y="597.82" width="65.6" height="28.71" fill="#f0f0f0" />
<rect x="343.4" y="597.82" width="99.4" height="28.71" fill="#ffffff" />
<rect x="277.8" y="624.83" width="65.6" height="1.7" fill="#5d5d5d" />
<rect x="343.4" y="625.23" width="99.4" height="1.3" fill="#c6c6c6" />
<text transform="translate(310 617.73) scale(0.95 1)" font-family='"Liberation Sans", sans-serif' font-size="15" font-weight="bold" fill="#000" text-anchor="middle" >T°</text>
<rect x="277.8" y="626.53" width="65.6" height="28.71" fill="#f0f0f0" />
<rect x="343.4" y="626.53" width="99.4" height="28.71" fill="#e0e0e0" />
<rect x="277.8" y="653.54" width="65.6" height="1.7" fill="#5d5d5d" />
<rect x="343.4" y="653.94" width="99.4" height="1.3" fill="#c6c6c6" />
<text transform="translate(310 646.44) scale(0.95 1)" font-family='"Liberation Sans", sans-serif' font-size="15" font-weight="bold" fill="#000" text-anchor="middle" >X</text>
<rect x="277.8" y="655.24" width="65.6" height="28.71" fill="#f0f0f0" />
<rect x="343.4" y="655.24" width="99.4" height="28.71" fill="#e0e0e0" />
<rect x="277.8" y="682.25" width="65.6" height="1.7" fill="#5d5d5d" />
<rect x="343.4" y="682.65" width="99.4" height="1.3" fill="#c6c6c6" />
<text transform="translate(310 675.15) scale(0.95 1)" font-family='"Liberation Sans", sans-serif' font-size="15" font-weight="bold" fill="#000" text-anchor="middle" >Y</text>
<rect x="277.8" y="683.95" width="65.6" height="28.71" fill="#f0f0f0" />
<rect x="343.4" y="683.95" width="99.4" height="28.71" fill="#e0e0e0" />
<rect x="277.8" y="710.96" width="65.6" height="1.7" fill="#5d5d5d" />
<rect x="343.4" y="711.36" width="99.4" height="1.3" fill="#c6c6c6" />
<text transform="translate(310 703.86) scale(0.95 1)" font-family='"Liberation Sans", sans-serif' font-size="15" font-weight="bold" fill="#000" text-anchor="middle" >Z</text>
<rect x="277.8" y="712.66" width="65.6" height="28.71" fill="#f0f0f0" />
<rect x="343.4" y="712.66" width="99.4" height="28.71" fill="#ffffff" />
<rect x="277.8" y="739.67" width="65.6" height="1.7" fill="#5d5d5d" />
<rect x="343.4" y="740.07" width="99.4" height="1.3" fill="#c6c6c6" />
<text transform="translate(310 732.57) scale(0.95 1)" font-family='"Liberation Sans", sans-serif' font-size="15" font-weight="bold" fill="#000" text-anchor="middle" >R</text>
<rect x="277.8" y="741.37" width="65.6" height="28.71" fill="#f0f0f0" />
<rect x="343.4" y="741.37" width="99.4" height="28.71" fill="#ffffff" />
<rect x="277.8" y="768.38" width="65.6" height="1.7" fill="#5d5d5d" />
<rect x="343.4" y="768.78" width="99.4" height="1.3" fill="#c6c6c6" />
<text transform="translate(310 761.28) scale(0.95 1)" font-family='"Liberation Sans", sans-serif' font-size="15" font-weight="bold" fill="#000" text-anchor="middle" >G</text>
<rect x="277.8" y="770.08" width="65.6" height="28.71" fill="#f0f0f0" />
<rect x="343.4" y="770.08" width="99.4" height="28.71" fill="#ffffff" />
<rect x="277.8" y="797.09" width="65.6" height="1.7" fill="#5d5d5d" />
<rect x="343.4" y="797.49" width="99.4" height="1.3" fill="#c6c6c6" />
<text transform="translate(310 789.99) scale(0.95 1)" font-family='"Liberation Sans", sans-serif' font-size="15" font-weight="bold" fill="#000" text-anchor="middle" >B</text>
<rect x="277.8" y="798.79" width="65.6" height="28.71" fill="#f0f0f0" />
<rect x="343.4" y="798.79" width="99.4" height="28.71" fill="#e0e0e0" />
<rect x="277.8" y="825.8" width="65.6" height="1.7" fill="#5d5d5d" />
<rect x="343.4" y="826.2" width="99.4" height="1.3" fill="#c6c6c6" />
<text transform="translate(310 818.7) scale(0.95 1)" font-family='"Liberation Sans", sans-serif' font-size="15" font-weight="bold" fill="#000" text-anchor="middle" >x</text>
<rect x="277.8" y="827.5" width="65.6" height="28.71" fill="#f0f0f0" />
<rect x="343.4" y="827.5" width="99.4" height="28.71" fill="#e0e0e0" />
<rect x="277.8" y="854.51" width="65.6" height="1.7" fill="#5d5d5d" />
<rect x="343.4" y="854.91" width="99.4" height="1.3" fill="#c6c6c6" />
<text transform="translate(310 847.41) scale(0.95 1)" font-family='"Liberation Sans", sans-serif' font-size="15" font-weight="bold" fill="#000" text-anchor="middle" >y</text>
<rect x="277.8" y="856.21" width="65.6" height="28.71" fill="#f0f0f0" />
<rect x="343.4" y="856.21" width="99.4" height="28.71" fill="#e0e0e0" />
<rect x="277.8" y="883.22" width="65.6" height="1.7" fill="#5d5d5d" />
<rect x="343.4" y="883.62" width="99.4" height="1.3" fill="#c6c6c6" />
<text transform="translate(310 876.12) scale(0.95 1)" font-family='"Liberation Sans", sans-serif' font-size="15" font-weight="bold" fill="#000" text-anchor="middle" >Y</text>
<rect x="277.8" y="884.92" width="65.6" height="28.71" fill="#f0f0f0" />
<rect x="343.4" y="884.92" width="99.4" height="28.71" fill="#ffffff" />
<rect x="277.8" y="911.93" width="65.6" height="1.7" fill="#5d5d5d" />
<rect x="343.4" y="912.33" width="99.4" height="1.3" fill="#c6c6c6" />
<text transform="translate(310 904.83) scale(0.95 1)" font-family='"Liberation Sans", sans-serif' font-size="15" font-weight="bold" fill="#000" text-anchor="middle" >x</text>
<rect x="277.8" y="913.63" width="65.6" height="28.71" fill="#f0f0f0" />
<rect x="343.4" y="913.63" width="99.4" height="28.71" fill="#ffffff" />
<rect x="277.8" y="940.64" width="65.6" height="1.7" fill="#5d5d5d" />
<rect x="343.4" y="941.04" width="99.4" height="1.3" fill="#c6c6c6" />
<text transform="translate(310 933.54) scale(0.95 1)" font-family='"Liberation Sans", sans-serif' font-size="15" font-weight="bold" fill="#000" text-anchor="middle" >y</text>
<rect x="277.8" y="942.34" width="65.6" height="28.71" fill="#f0f0f0" />
<rect x="343.4" y="942.34" width="99.4" height="28.71" fill="#ffffff" />
<rect x="277.8" y="969.35" width="65.6" height="1.7" fill="#5d5d5d" />
<rect x="343.4" y="969.75" width="99.4" height="1.3" fill="#c6c6c6" />
<text transform="translate(310 962.25) scale(0.95 1)" font-family='"Liberation Sans", sans-serif' font-size="15" font-weight="bold" fill="#000" text-anchor="middle" >z</text>
<rect x="277.8" y="971.05" width="65.6" height="28.71" fill="#f0f0f0" />
<rect x="343.4" y="971.05" width="99.4" height="28.71" fill="#e0e0e0" />
<rect x="277.8" y="998.06" width="65.6" height="1.7" fill="#5d5d5d" />
<rect x="343.4" y="998.46" width="99.4" height="1.3" fill="#c6c6c6" />
<text transform="translate(310 990.96) scale(0.95 1)" font-family='"Liberation Sans", sans-serif' font-size="15" font-weight="bold" fill="#000" text-anchor="middle" >L</text>
<rect x="277.8" y="999.76" width="65.6" height="28.71" fill="#f0f0f0" />
<rect x="343.4" y="999.76" width="99.4" height="28.71" fill="#e0e0e0" />
<rect x="277.8" y="1026.77" width="65.6" height="1.7" fill="#5d5d5d" />
<rect x="343.4" y="1027.17" width="99.4" height="1.3" fill="#c6c6c6" />
<text transform="translate(310 1019.67) scale(0.95 1)" font-family='"Liberation Sans", sans-serif' font-size="15" font-weight="bold" fill="#000" text-anchor="middle" >a</text>
<rect x="277.8" y="1028.47" width="65.6" height="28.71" fill="#f0f0f0" />
<rect x="343.4" y="1028.47" width="99.4" height="28.71" fill="#e0e0e0" />
<rect x="277.8" y="1055.48" width="65.6" height="1.7" fill="#5d5d5d" />
<rect x="343.4" y="1055.88" width="99.4" height="1.3" fill="#c6c6c6" />
<text transform="translate(310 1048.38) scale(0.95 1)" font-family='"Liberation Sans", sans-serif' font-size="15" font-weight="bold" fill="#000" text-anchor="middle" >b</text>
<rect x="277.8" y="1057.18" width="65.6" height="28.71" fill="#f0f0f0" />
<rect x="343.4" y="1057.18" width="99.4" height="28.71" fill="#ffffff" />
<rect x="277.8" y="1084.19" width="65.6" height="1.7" fill="#5d5d5d" />
<rect x="343.4" y="1084.59" width="99.4" height="1.3" fill="#c6c6c6" />
<text transform="translate(310 1077.09) scale(0.95 1)" font-family='"Liberation Sans", sans-serif' font-size="15" font-weight="bold" fill="#000" text-anchor="middle" >L</text>
<rect x="277.8" y="1085.89" width="65.6" height="28.71" fill="#f0f0f0" />
<rect x="343.4" y="1085.89" width="99.4" height="28.71" fill="#ffffff" />
<rect x="277.8" y="1112.9" width="65.6" height="1.7" fill="#5d5d5d" />
<rect x="343.4" y="1113.3" width="99.4" height="1.3" fill="#c6c6c6" />
<text transform="translate(310 1105.8) scale(0.95 1)" font-family='"Liberation Sans", sans-serif' font-size="15" font-weight="bold" fill="#000" text-anchor="middle" >C</text>
<rect x="277.8" y="1114.6" width="65.6" height="28.71" fill="#f0f0f0" />
<rect x="343.4" y="1114.6" width="99.4" height="28.71" fill="#ffffff" />
<rect x="277.8" y="1141.61" width="65.6" height="1.7" fill="#5d5d5d" />
<rect x="343.4" y="1142.01" width="99.4" height="1.3" fill="#c6c6c6" />
<text transform="translate(310 1134.51) scale(0.95 1)" font-family='"Liberation Sans", sans-serif' font-size="15" font-weight="bold" fill="#000" text-anchor="middle" >H</text>
<rect x="277.8" y="1143.31" width="65.6" height="28.71" fill="#f0f0f0" />
<rect x="343.4" y="1143.31" width="99.4" height="28.71" fill="#e0e0e0" />
<rect x="277.8" y="1170.32" width="65.6" height="1.7" fill="#5d5d5d" />
<rect x="343.4" y="1170.72" width="99.4" height="1.3" fill="#c6c6c6" />
<text transform="translate(310 1163.22) scale(0.95 1)" font-family='"Liberation Sans", sans-serif' font-size="15" font-weight="bold" fill="#000" text-anchor="middle" >L</text>
<rect x="277.8" y="1172.02" width="65.6" height="28.71" fill="#f0f0f0" />
<rect x="343.4" y="1172.02" width="99.4" height="28.71" fill="#e0e0e0" />
<rect x="277.8" y="1199.03" width="65.6" height="1.7" fill="#5d5d5d" />
<rect x="343.4" y="1199.43" width="99.4" height="1.3" fill="#c6c6c6" />
<text transform="translate(310 1191.93) scale(0.95 1)" font-family='"Liberation Sans", sans-serif' font-size="15" font-weight="bold" fill="#000" text-anchor="middle" >M</text>
<rect x="277.8" y="1200.73" width="65.6" height="28.71" fill="#f0f0f0" />
<rect x="343.4" y="1200.73" width="99.4" height="28.71" fill="#e0e0e0" />
<rect x="277.8" y="1227.74" width="65.6" height="1.7" fill="#5d5d5d" />
<rect x="343.4" y="1228.14" width="99.4" height="1.3" fill="#c6c6c6" />
<text transform="translate(310 1220.64) scale(0.95 1)" font-family='"Liberation Sans", sans-serif' font-size="15" font-weight="bold" fill="#000" text-anchor="middle" >S</text>
<rect x="341.7" y="540.4" width="1.7" height="689.04" fill="#5d5d5d" />
<rect x="441.6" y="540.4" width="1.2" height="689.04" fill="#c6c6c6" />
<rect x="277.2" y="1229.44" width="165.6" height="119.96" fill="#a0a0a0" />
<rect x="454.2" y="561.4" width="2.2" height="496.6" fill="#7a7a7a" />
<!-- p4_charts -->
<rect x="485.8" y="480" width="2045.4" height="881.3" fill="#fcfcfc" />
<rect x="488.8" y="483.6" width="2039.8" height="875.8" fill="#939393" />
<rect x="488.8" y="483.6" width="2039.8" height="1.45" fill="#878787" />
<rect x="490.8" y="485.05" width="2035.8" height="872.9" fill="#ebebeb" />
<rect x="490.8" y="485.05" width="2035.8" height="20.95" fill="#8a8a8a" />
<path d="M490.8 506 L490.8 489.65 Q490.8 485.05 495.4 485.05 L2522 485.05 Q2526.6 485.05 2526.6 489.65 L2526.6 506 Z" fill="url(#hdr)"/>
<rect x="490.8" y="506" width="2035.8" height="1.2" fill="#a6a6a6" />
<text x="497.6" y="501.4" font-family='"DejaVu Sans", "Liberation Sans", sans-serif' font-size="14" font-weight="bold" fill="#4a4a57" text-anchor="start" textLength="96" lengthAdjust="spacing" >Information</text>
<rect x="495" y="511.6" width="377.4" height="28" fill="#ffffff" />
<rect x="495" y="511.6" width="376" height="26.4" fill="#7a7a7a" />
<rect x="497" y="513.4" width="374" height="24.6" fill="#a8a8a8" />
<rect x="498.6" y="515" width="371" height="21.8" fill="#ffffff" />
<rect x="849.6" y="515" width="20" height="21.8" fill="#f0f0f0" />
<rect x="849.6" y="515" width="1.4" height="21.8" fill="#fbfbfb" />
<rect x="849.6" y="515" width="20" height="1.2" fill="#fbfbfb" />
<rect x="868" y="515" width="1.6" height="21.8" fill="#8a8a8a" />
<rect x="849.6" y="535.4" width="20" height="1.4" fill="#8a8a8a" />
<path d="M855.6 523.6 L864.4 523.6 L860 528.6 Z" fill="#000"/>
<text x="500.6" y="531.8" font-family='"DejaVu Sans", "Liberation Sans", sans-serif' font-size="16" font-weight="normal" fill="#000" text-anchor="start" textLength="158" lengthAdjust="spacing" >Luminance - Gamma</text>
<rect x="497.3" y="549.2" width="1013.9" height="801.2" fill="#fdfdfd" /><rect x="497.3" y="549.2" width="1012.3" height="799.2" fill="#6e6e6e" /><rect x="500.3" y="551.4" width="1009.3" height="797" fill="#f4f4f4" /><rect x="500.3" y="551.4" width="1007.3" height="794.6" fill="#9c9c9c" /><path d="M1511.2 549.2 L1507.1 553.3 L1511.2 553.3 L1511.2 549.2 Z" fill="#fdfdfd"/>
<rect x="502" y="553.8" width="1005.6" height="792.2" fill="url(#cg)" />
<g clip-path="url(#clipL)"><text x="1495.4" y="1293.4" font-family='"Liberation Sans", sans-serif' font-size="19" font-weight="bold" fill="#9a9a9a" text-anchor="end" textLength="194" lengthAdjust="spacing" opacity="0.8">hcfr.sourceforge.net</text><rect x="501.98" y="553.8" width="1.44" height="792.2" fill="#0b4545" opacity="0.9"/><rect x="601.94" y="553.8" width="1.44" height="792.2" fill="#0b4545" opacity="0.9"/><rect x="702.5" y="553.8" width="1.44" height="792.2" fill="#0b4545" opacity="0.9"/><rect x="803.06" y="553.8" width="1.44" height="792.2" fill="#0b4545" opacity="0.9"/><rect x="903.62" y="553.8" width="1.44" height="792.2" fill="#0b4545" opacity="0.9"/><rect x="1004.18" y="553.8" width="1.44" height="792.2" fill="#0b4545" opacity="0.9"/><rect x="1104.74" y="553.8" width="1.44" height="792.2" fill="#0b4545" opacity="0.9"/><rect x="1205.3" y="553.8" width="1.44" height="792.2" fill="#0b4545" opacity="0.9"/><rect x="1305.86" y="553.8" width="1.44" height="792.2" fill="#0b4545" opacity="0.9"/><rect x="1406.42" y="553.8" width="1.44" height="792.2" fill="#0b4545" opacity="0.9"/><rect x="502" y="1288.69" width="1005.6" height="1.44" fill="#0b4545" opacity="0.9"/><rect x="502" y="1232.11" width="1005.6" height="1.44" fill="#0b4545" opacity="0.9"/><rect x="502" y="1175.52" width="1005.6" height="1.44" fill="#0b4545" opacity="0.9"/><rect x="502" y="1118.94" width="1005.6" height="1.44" fill="#0b4545" opacity="0.9"/><rect x="502" y="1062.35" width="1005.6" height="1.44" fill="#0b4545" opacity="0.9"/><rect x="502" y="1005.77" width="1005.6" height="1.44" fill="#0b4545" opacity="0.9"/><rect x="502" y="949.18" width="1005.6" height="1.44" fill="#0b4545" opacity="0.9"/><rect x="502" y="892.59" width="1005.6" height="1.44" fill="#0b4545" opacity="0.9"/><rect x="502" y="836.01" width="1005.6" height="1.44" fill="#0b4545" opacity="0.9"/><rect x="502" y="779.42" width="1005.6" height="1.44" fill="#0b4545" opacity="0.9"/><rect x="502" y="722.84" width="1005.6" height="1.44" fill="#0b4545" opacity="0.9"/><rect x="502" y="666.25" width="1005.6" height="1.44" fill="#0b4545" opacity="0.9"/><rect x="502" y="609.67" width="1005.6" height="1.44" fill="#0b4545" opacity="0.9"/><text x="505.6" y="1284.01" font-family='"Liberation Serif", serif' font-size="17.2" font-weight="normal" fill="#bebebe" text-anchor="start" >25 cd m-2</text><text x="505.6" y="1227.43" font-family='"Liberation Serif", serif' font-size="17.2" font-weight="normal" fill="#bebebe" text-anchor="start" >50 cd m-2</text><text x="505.6" y="1170.84" font-family='"Liberation Serif", serif' font-size="17.2" font-weight="normal" fill="#bebebe" text-anchor="start" >75 cd m-2</text><text x="505.6" y="1114.26" font-family='"Liberation Serif", serif' font-size="17.2" font-weight="normal" fill="#bebebe" text-anchor="start" >100 cd m-2</text><text x="505.6" y="1057.67" font-family='"Liberation Serif", serif' font-size="17.2" font-weight="normal" fill="#bebebe" text-anchor="start" >125 cd m-2</text><text x="505.6" y="1001.09" font-family='"Liberation Serif", serif' font-size="17.2" font-weight="normal" fill="#bebebe" text-anchor="start" >150 cd m-2</text><text x="505.6" y="944.5" font-family='"Liberation Serif", serif' font-size="17.2" font-weight="normal" fill="#bebebe" text-anchor="start" >175 cd m-2</text><text x="505.6" y="887.91" font-family='"Liberation Serif", serif' font-size="17.2" font-weight="normal" fill="#bebebe" text-anchor="start" >200 cd m-2</text><text x="505.6" y="831.33" font-family='"Liberation Serif", serif' font-size="17.2" font-weight="normal" fill="#bebebe" text-anchor="start" >225 cd m-2</text><text x="505.6" y="774.74" font-family='"Liberation Serif", serif' font-size="17.2" font-weight="normal" fill="#bebebe" text-anchor="start" >250 cd m-2</text><text x="505.6" y="718.16" font-family='"Liberation Serif", serif' font-size="17.2" font-weight="normal" fill="#bebebe" text-anchor="start" >275 cd m-2</text><text x="505.6" y="661.57" font-family='"Liberation Serif", serif' font-size="17.2" font-weight="normal" fill="#bebebe" text-anchor="start" >300 cd m-2</text><text x="505.6" y="604.99" font-family='"Liberation Serif", serif' font-size="17.2" font-weight="normal" fill="#bebebe" text-anchor="start" >325 cd m-2</text><text x="604.96" y="1342" font-family='"Liberation Serif", serif' font-size="17.2" font-weight="normal" fill="rgb(208,208,208)" text-anchor="start" >10% White</text><text x="705.52" y="1342" font-family='"Liberation Serif", serif' font-size="17.2" font-weight="normal" fill="rgb(192,192,192)" text-anchor="start" >20% White</text><text x="806.08" y="1342" font-family='"Liberation Serif", serif' font-size="17.2" font-weight="normal" fill="rgb(172,172,172)" text-anchor="start" >30% White</text><text x="906.64" y="1342" font-family='"Liberation Serif", serif' font-size="17.2" font-weight="normal" fill="rgb(150,150,150)" text-anchor="start" >40% White</text><text x="1007.2" y="1342" font-family='"Liberation Serif", serif' font-size="17.2" font-weight="normal" fill="rgb(127,127,127)" text-anchor="start" >50% White</text><text x="1107.76" y="1342" font-family='"Liberation Serif", serif' font-size="17.2" font-weight="normal" fill="rgb(102,102,102)" text-anchor="start" >60% White</text><text x="1208.32" y="1342" font-family='"Liberation Serif", serif' font-size="17.2" font-weight="normal" fill="rgb(76,76,76)" text-anchor="start" >70% White</text><text x="1308.88" y="1342" font-family='"Liberation Serif", serif' font-size="17.2" font-weight="normal" fill="rgb(51,51,51)" text-anchor="start" >80% White</text><text x="1409.44" y="1342" font-family='"Liberation Serif", serif' font-size="17.2" font-weight="normal" fill="rgb(25,25,25)" text-anchor="start" >90% White</text><text x="1021.6" y="570.4" font-family='"Liberation Sans", sans-serif' font-size="18.4" font-weight="bold" fill="#e0e000" text-anchor="middle" textLength="190" lengthAdjust="spacing" >Luminance Response</text><polyline fill="none" stroke="#ffff00" stroke-width="2.3" stroke-linejoin="round" points="497.3,1345.4 547.69,1344.4 598.08,1341.2 648.47,1334.2 698.86,1325 749.25,1310.4 799.64,1289.4 850.03,1269.8 900.42,1243.6 950.81,1208.4 1001.2,1176.6 1051.59,1138.6 1101.98,1082.5 1152.37,1042.6 1202.76,992 1253.15,912.7 1303.54,844 1353.93,793.5 1404.32,728.6 1454.71,651.4 1505.1,566.6"/><polyline fill="none" stroke="#e6e6e6" stroke-width="1.2" stroke-dasharray="5 4" points="497.3,1345.4 547.69,1344.4 598.08,1341.2 648.47,1334.2 698.86,1325 749.25,1310.6 799.64,1291 850.03,1270.2 900.42,1243.8 950.81,1212 1001.2,1177 1051.59,1139 1101.98,1095 1152.37,1045.6 1202.76,992.6 1253.15,933.5 1303.54,871.2 1353.93,802.5 1404.32,730 1454.71,651.6 1505.1,566.6"/><rect x="542.59" y="1339.3" width="10.2" height="10.2" fill="#ffff00" /><rect x="592.98" y="1336.1" width="10.2" height="10.2" fill="#ffff00" /><rect x="643.37" y="1329.1" width="10.2" height="10.2" fill="#ffff00" /><rect x="693.76" y="1319.9" width="10.2" height="10.2" fill="#ffff00" /><rect x="744.15" y="1305.3" width="10.2" height="10.2" fill="#ffff00" /><rect x="794.54" y="1284.3" width="10.2" height="10.2" fill="#ffff00" /><rect x="844.93" y="1264.7" width="10.2" height="10.2" fill="#ffff00" /><rect x="895.32" y="1238.5" width="10.2" height="10.2" fill="#ffff00" /><rect x="945.71" y="1203.3" width="10.2" height="10.2" fill="#ffff00" /><rect x="996.1" y="1171.5" width="10.2" height="10.2" fill="#ffff00" /><rect x="1046.49" y="1133.5" width="10.2" height="10.2" fill="#ffff00" /><rect x="1096.88" y="1077.4" width="10.2" height="10.2" fill="#ffff00" /><rect x="1147.27" y="1037.5" width="10.2" height="10.2" fill="#ffff00" /><rect x="1197.66" y="986.9" width="10.2" height="10.2" fill="#ffff00" /><rect x="1248.05" y="907.6" width="10.2" height="10.2" fill="#ffff00" /><rect x="1298.44" y="838.9" width="10.2" height="10.2" fill="#ffff00" /><rect x="1348.83" y="788.4" width="10.2" height="10.2" fill="#ffff00" /><rect x="1399.22" y="723.5" width="10.2" height="10.2" fill="#ffff00" /><rect x="1449.61" y="646.3" width="10.2" height="10.2" fill="#ffff00" /><rect x="542.59" y="1339.3" width="10.2" height="10.2" fill="#e6e6e6" /><rect x="592.98" y="1336.1" width="10.2" height="10.2" fill="#e6e6e6" /><rect x="643.37" y="1329.1" width="10.2" height="10.2" fill="#e6e6e6" /><rect x="693.76" y="1319.9" width="10.2" height="10.2" fill="#e6e6e6" /><rect x="744.15" y="1305.5" width="10.2" height="10.2" fill="#e6e6e6" /><rect x="794.54" y="1285.9" width="10.2" height="10.2" fill="#e6e6e6" /><rect x="844.93" y="1265.1" width="10.2" height="10.2" fill="#e6e6e6" /><rect x="895.32" y="1238.7" width="10.2" height="10.2" fill="#e6e6e6" /><rect x="945.71" y="1206.9" width="10.2" height="10.2" fill="#e6e6e6" /><rect x="996.1" y="1171.9" width="10.2" height="10.2" fill="#e6e6e6" /><rect x="1046.49" y="1133.9" width="10.2" height="10.2" fill="#e6e6e6" /><rect x="1096.88" y="1089.9" width="10.2" height="10.2" fill="#e6e6e6" /><rect x="1147.27" y="1040.5" width="10.2" height="10.2" fill="#e6e6e6" /><rect x="1197.66" y="987.5" width="10.2" height="10.2" fill="#e6e6e6" /><rect x="1248.05" y="928.4" width="10.2" height="10.2" fill="#e6e6e6" /><rect x="1298.44" y="866.1" width="10.2" height="10.2" fill="#e6e6e6" /><rect x="1348.83" y="797.4" width="10.2" height="10.2" fill="#e6e6e6" /><rect x="1399.22" y="724.9" width="10.2" height="10.2" fill="#e6e6e6" /><rect x="1449.61" y="646.5" width="10.2" height="10.2" fill="#e6e6e6" /><rect x="502.7" y="1340.1" width="5.2" height="9.9" fill="#e6e6e6" /><rect x="1502.5" y="562.9" width="5.4" height="9.3" fill="#e6e6e6" /></g>
<rect x="1512.3" y="549.2" width="1013.9" height="801.2" fill="#fdfdfd" /><rect x="1512.3" y="549.2" width="1012.3" height="799.2" fill="#6e6e6e" /><rect x="1515.3" y="551.4" width="1009.3" height="797" fill="#f4f4f4" /><rect x="1515.3" y="551.4" width="1007.3" height="794.6" fill="#9c9c9c" /><path d="M2526.2 549.2 L2522.1 553.3 L2526.2 553.3 L2526.2 549.2 Z" fill="#fdfdfd"/>
<rect x="1517" y="553.8" width="1005.6" height="792.2" fill="url(#cg)" />
<g clip-path="url(#clipR)"><text x="2510.4" y="1293.4" font-family='"Liberation Sans", sans-serif' font-size="19" font-weight="bold" fill="#9a9a9a" text-anchor="end" textLength="194" lengthAdjust="spacing" opacity="0.8">hcfr.sourceforge.net</text><rect x="1516.98" y="553.8" width="1.44" height="792.2" fill="#0b4545" opacity="0.9"/><rect x="1616.94" y="553.8" width="1.44" height="792.2" fill="#0b4545" opacity="0.9"/><rect x="1717.5" y="553.8" width="1.44" height="792.2" fill="#0b4545" opacity="0.9"/><rect x="1818.06" y="553.8" width="1.44" height="792.2" fill="#0b4545" opacity="0.9"/><rect x="1918.62" y="553.8" width="1.44" height="792.2" fill="#0b4545" opacity="0.9"/><rect x="2019.18" y="553.8" width="1.44" height="792.2" fill="#0b4545" opacity="0.9"/><rect x="2119.74" y="553.8" width="1.44" height="792.2" fill="#0b4545" opacity="0.9"/><rect x="2220.3" y="553.8" width="1.44" height="792.2" fill="#0b4545" opacity="0.9"/><rect x="2320.86" y="553.8" width="1.44" height="792.2" fill="#0b4545" opacity="0.9"/><rect x="2421.42" y="553.8" width="1.44" height="792.2" fill="#0b4545" opacity="0.9"/><rect x="1517" y="1305.67" width="1005.6" height="1.44" fill="#0b4545" opacity="0.9"/><text x="1520.4" y="1300.39" font-family='"Liberation Serif", serif' font-size="17" font-weight="normal" fill="#bebebe" text-anchor="start" >1.1</text><rect x="1517" y="1266.06" width="1005.6" height="1.44" fill="#0b4545" opacity="0.9"/><text x="1520.4" y="1260.78" font-family='"Liberation Serif", serif' font-size="17" font-weight="normal" fill="#bebebe" text-anchor="start" >1.2</text><rect x="1517" y="1226.45" width="1005.6" height="1.44" fill="#0b4545" opacity="0.9"/><text x="1520.4" y="1221.17" font-family='"Liberation Serif", serif' font-size="17" font-weight="normal" fill="#bebebe" text-anchor="start" >1.3</text><rect x="1517" y="1186.84" width="1005.6" height="1.44" fill="#0b4545" opacity="0.9"/><text x="1520.4" y="1181.56" font-family='"Liberation Serif", serif' font-size="17" font-weight="normal" fill="#bebebe" text-anchor="start" >1.4</text><rect x="1517" y="1147.23" width="1005.6" height="1.44" fill="#0b4545" opacity="0.9"/><text x="1520.4" y="1141.95" font-family='"Liberation Serif", serif' font-size="17" font-weight="normal" fill="#bebebe" text-anchor="start" >1.5</text><rect x="1517" y="1107.62" width="1005.6" height="1.44" fill="#0b4545" opacity="0.9"/><text x="1520.4" y="1102.34" font-family='"Liberation Serif", serif' font-size="17" font-weight="normal" fill="#bebebe" text-anchor="start" >1.6</text><rect x="1517" y="1068.01" width="1005.6" height="1.44" fill="#0b4545" opacity="0.9"/><text x="1520.4" y="1062.73" font-family='"Liberation Serif", serif' font-size="17" font-weight="normal" fill="#bebebe" text-anchor="start" >1.7</text><rect x="1517" y="1028.4" width="1005.6" height="1.44" fill="#0b4545" opacity="0.9"/><text x="1520.4" y="1023.12" font-family='"Liberation Serif", serif' font-size="17" font-weight="normal" fill="#bebebe" text-anchor="start" >1.8</text><rect x="1517" y="988.79" width="1005.6" height="1.44" fill="#0b4545" opacity="0.9"/><text x="1520.4" y="983.51" font-family='"Liberation Serif", serif' font-size="17" font-weight="normal" fill="#bebebe" text-anchor="start" >1.9</text><rect x="1517" y="949.18" width="1005.6" height="1.44" fill="#0b4545" opacity="0.9"/><text x="1520.4" y="943.9" font-family='"Liberation Serif", serif' font-size="17" font-weight="normal" fill="#bebebe" text-anchor="start" >2</text><rect x="1517" y="909.57" width="1005.6" height="1.44" fill="#0b4545" opacity="0.9"/><text x="1520.4" y="904.29" font-family='"Liberation Serif", serif' font-size="17" font-weight="normal" fill="#bebebe" text-anchor="start" >2.1</text><rect x="1517" y="869.96" width="1005.6" height="1.44" fill="#0b4545" opacity="0.9"/><text x="1520.4" y="864.68" font-family='"Liberation Serif", serif' font-size="17" font-weight="normal" fill="#bebebe" text-anchor="start" >2.2</text><rect x="1517" y="830.35" width="1005.6" height="1.44" fill="#0b4545" opacity="0.9"/><text x="1520.4" y="825.07" font-family='"Liberation Serif", serif' font-size="17" font-weight="normal" fill="#bebebe" text-anchor="start" >2.3</text><rect x="1517" y="790.74" width="1005.6" height="1.44" fill="#0b4545" opacity="0.9"/><text x="1520.4" y="785.46" font-family='"Liberation Serif", serif' font-size="17" font-weight="normal" fill="#bebebe" text-anchor="start" >2.4</text><rect x="1517" y="751.13" width="1005.6" height="1.44" fill="#0b4545" opacity="0.9"/><text x="1520.4" y="745.85" font-family='"Liberation Serif", serif' font-size="17" font-weight="normal" fill="#bebebe" text-anchor="start" >2.5</text><rect x="1517" y="711.52" width="1005.6" height="1.44" fill="#0b4545" opacity="0.9"/><text x="1520.4" y="706.24" font-family='"Liberation Serif", serif' font-size="17" font-weight="normal" fill="#bebebe" text-anchor="start" >2.6</text><rect x="1517" y="671.91" width="1005.6" height="1.44" fill="#0b4545" opacity="0.9"/><text x="1520.4" y="666.63" font-family='"Liberation Serif", serif' font-size="17" font-weight="normal" fill="#bebebe" text-anchor="start" >2.7</text><rect x="1517" y="632.3" width="1005.6" height="1.44" fill="#0b4545" opacity="0.9"/><text x="1520.4" y="627.02" font-family='"Liberation Serif", serif' font-size="17" font-weight="normal" fill="#bebebe" text-anchor="start" >2.8</text><rect x="1517" y="592.69" width="1005.6" height="1.44" fill="#0b4545" opacity="0.9"/><text x="1520.4" y="587.41" font-family='"Liberation Serif", serif' font-size="17" font-weight="normal" fill="#bebebe" text-anchor="start" >2.9</text><text x="1619.96" y="1342" font-family='"Liberation Serif", serif' font-size="17.2" font-weight="normal" fill="rgb(208,208,208)" text-anchor="start" >10% White</text><text x="1720.52" y="1342" font-family='"Liberation Serif", serif' font-size="17.2" font-weight="normal" fill="rgb(192,192,192)" text-anchor="start" >20% White</text><text x="1821.08" y="1342" font-family='"Liberation Serif", serif' font-size="17.2" font-weight="normal" fill="rgb(172,172,172)" text-anchor="start" >30% White</text><text x="1921.64" y="1342" font-family='"Liberation Serif", serif' font-size="17.2" font-weight="normal" fill="rgb(150,150,150)" text-anchor="start" >40% White</text><text x="2022.2" y="1342" font-family='"Liberation Serif", serif' font-size="17.2" font-weight="normal" fill="rgb(127,127,127)" text-anchor="start" >50% White</text><text x="2122.76" y="1342" font-family='"Liberation Serif", serif' font-size="17.2" font-weight="normal" fill="rgb(102,102,102)" text-anchor="start" >60% White</text><text x="2223.32" y="1342" font-family='"Liberation Serif", serif' font-size="17.2" font-weight="normal" fill="rgb(76,76,76)" text-anchor="start" >70% White</text><text x="2323.88" y="1342" font-family='"Liberation Serif", serif' font-size="17.2" font-weight="normal" fill="rgb(51,51,51)" text-anchor="start" >80% White</text><text x="2424.44" y="1342" font-family='"Liberation Serif", serif' font-size="17.2" font-weight="normal" fill="rgb(25,25,25)" text-anchor="start" >90% White</text><text x="2035.6" y="570.4" font-family='"Liberation Sans", sans-serif' font-size="18.4" font-weight="bold" fill="#e0e000" text-anchor="middle" textLength="129" lengthAdjust="spacing" >EOTF(Gamma)</text><polyline fill="none" stroke="#ffff00" stroke-width="2.3" stroke-linejoin="round" points="1562.68,808.8 1613.16,841.7 1663.64,855.1 1714.12,872 1764.6,859.5 1815.08,878.2 1865.56,864.6 1916.04,868.6 1966.52,883.9 2017,878.4 2067.48,868.6 2117.96,907.7 2168.44,875.8 2218.92,865.6 2269.4,938.8 2319.88,967.6 2370.36,911.3 2420.84,878.4 2471.32,865.6"/><line x1="1562.68" y1="870.4" x2="2471.32" y2="870.4" stroke="#e6e6e6" stroke-width="1.3" stroke-dasharray="5 4"/><rect x="1557.58" y="803.7" width="10.2" height="10.2" fill="#ffff00" /><rect x="1608.06" y="836.6" width="10.2" height="10.2" fill="#ffff00" /><rect x="1658.54" y="850" width="10.2" height="10.2" fill="#ffff00" /><rect x="1709.02" y="866.9" width="10.2" height="10.2" fill="#ffff00" /><rect x="1759.5" y="854.4" width="10.2" height="10.2" fill="#ffff00" /><rect x="1809.98" y="873.1" width="10.2" height="10.2" fill="#ffff00" /><rect x="1860.46" y="859.5" width="10.2" height="10.2" fill="#ffff00" /><rect x="1910.94" y="863.5" width="10.2" height="10.2" fill="#ffff00" /><rect x="1961.42" y="878.8" width="10.2" height="10.2" fill="#ffff00" /><rect x="2011.9" y="873.3" width="10.2" height="10.2" fill="#ffff00" /><rect x="2062.38" y="863.5" width="10.2" height="10.2" fill="#ffff00" /><rect x="2112.86" y="902.6" width="10.2" height="10.2" fill="#ffff00" /><rect x="2163.34" y="870.7" width="10.2" height="10.2" fill="#ffff00" /><rect x="2213.82" y="860.5" width="10.2" height="10.2" fill="#ffff00" /><rect x="2264.3" y="933.7" width="10.2" height="10.2" fill="#ffff00" /><rect x="2314.78" y="962.5" width="10.2" height="10.2" fill="#ffff00" /><rect x="2365.26" y="906.2" width="10.2" height="10.2" fill="#ffff00" /><rect x="2415.74" y="873.3" width="10.2" height="10.2" fill="#ffff00" /><rect x="2466.22" y="860.5" width="10.2" height="10.2" fill="#ffff00" /><rect x="1557.58" y="865.3" width="10.2" height="10.2" fill="#e6e6e6" /><rect x="1608.06" y="865.3" width="10.2" height="10.2" fill="#e6e6e6" /><rect x="1658.54" y="865.3" width="10.2" height="10.2" fill="#e6e6e6" /><rect x="1709.02" y="865.3" width="10.2" height="10.2" fill="#e6e6e6" /><rect x="1759.5" y="865.3" width="10.2" height="10.2" fill="#e6e6e6" /><rect x="1809.98" y="865.3" width="10.2" height="10.2" fill="#e6e6e6" /><rect x="1860.46" y="865.3" width="10.2" height="10.2" fill="#e6e6e6" /><rect x="1910.94" y="865.3" width="10.2" height="10.2" fill="#e6e6e6" /><rect x="1961.42" y="865.3" width="10.2" height="10.2" fill="#e6e6e6" /><rect x="2011.9" y="865.3" width="10.2" height="10.2" fill="#e6e6e6" /><rect x="2062.38" y="865.3" width="10.2" height="10.2" fill="#e6e6e6" /><rect x="2112.86" y="865.3" width="10.2" height="10.2" fill="#e6e6e6" /><rect x="2163.34" y="865.3" width="10.2" height="10.2" fill="#e6e6e6" /><rect x="2213.82" y="865.3" width="10.2" height="10.2" fill="#e6e6e6" /><rect x="2264.3" y="865.3" width="10.2" height="10.2" fill="#e6e6e6" /><rect x="2314.78" y="865.3" width="10.2" height="10.2" fill="#e6e6e6" /><rect x="2365.26" y="865.3" width="10.2" height="10.2" fill="#e6e6e6" /><rect x="2415.74" y="865.3" width="10.2" height="10.2" fill="#e6e6e6" /><rect x="2466.22" y="865.3" width="10.2" height="10.2" fill="#e6e6e6" /></g>
<!-- p5_top -->
<rect x="2" y="4.3" width="19.9" height="19.5" fill="url(#appbg)" /><rect x="4.59" y="10.15" width="3.98" height="13.26" fill="url(#barR)" /><rect x="9.96" y="7.81" width="3.98" height="15.6" fill="url(#barG)" /><rect x="15.53" y="11.71" width="3.98" height="11.7" fill="url(#barB)" />
<text x="27.4" y="19.8" font-family='"Liberation Sans", sans-serif' font-size="15" font-weight="normal" fill="#242424" text-anchor="start" textLength="462.6" lengthAdjust="spacing" >HCFR Colorimeter - 3.5.1.4 - [SAMSUNG 65 QN90B CAL DAY FABRICA]</text>
<rect x="2405" y="13.6" width="12" height="1.2" fill="#222" />
<rect x="2463.4" y="10.4" width="8.6" height="8.8" rx="1.8" fill="none" stroke="#222" stroke-width="1.2"/>
<path d="M2466 10.2 L2466 9.6 Q2466 8.2 2467.6 8.2 L2472.6 8.2 Q2474.6 8.2 2474.6 10.2 L2474.6 15.4 Q2474.6 16.8 2473.2 16.8 L2472.4 16.8" fill="none" stroke="#222" stroke-width="1.2"/>
<path d="M2522.4 8.4 L2533.6 19.6 M2533.6 8.4 L2522.4 19.6" stroke="#222" stroke-width="1.3" fill="none"/>
<rect x="15.4" y="34.2" width="19.4" height="19.6" fill="url(#appbg)" /><rect x="17.92" y="40.08" width="3.88" height="13.33" fill="url(#barR)" /><rect x="23.16" y="37.73" width="3.88" height="15.68" fill="url(#barG)" /><rect x="28.59" y="41.65" width="3.88" height="11.76" fill="url(#barB)" />
<text x="41.4" y="48.8" font-family='"Liberation Sans", sans-serif' font-size="15" font-weight="normal" fill="#111" text-anchor="start" textLength="22.6" lengthAdjust="spacing" >File</text>
<rect x="41.4" y="50.3" width="8.6" height="1.4" fill="#222" />
<text x="87.6" y="48.8" font-family='"Liberation Sans", sans-serif' font-size="15" font-weight="normal" fill="#111" text-anchor="start" textLength="24.8" lengthAdjust="spacing" >Edit</text>
<rect x="87.6" y="50.3" width="9" height="1.4" fill="#222" />
<text x="136.4" y="48.8" font-family='"Liberation Sans", sans-serif' font-size="15" font-weight="normal" fill="#111" text-anchor="start" textLength="31.2" lengthAdjust="spacing" >View</text>
<rect x="136.4" y="50.3" width="9.6" height="1.4" fill="#222" />
<text x="191.6" y="48.8" font-family='"Liberation Sans", sans-serif' font-size="15" font-weight="normal" fill="#111" text-anchor="start" textLength="62" lengthAdjust="spacing" >Measures</text>
<rect x="191.6" y="50.3" width="12.4" height="1.4" fill="#222" />
<text x="277.8" y="48.8" font-family='"Liberation Sans", sans-serif' font-size="15" font-weight="normal" fill="#111" text-anchor="start" textLength="46" lengthAdjust="spacing" >Graphs</text>
<rect x="277.8" y="50.3" width="11" height="1.4" fill="#222" />
<text x="347.6" y="48.8" font-family='"Liberation Sans", sans-serif' font-size="15" font-weight="normal" fill="#111" text-anchor="start" textLength="66.4" lengthAdjust="spacing" >Advanced</text>
<rect x="347.6" y="50.3" width="9.8" height="1.4" fill="#222" />
<text x="437.4" y="48.8" font-family='"Liberation Sans", sans-serif' font-size="15" font-weight="normal" fill="#111" text-anchor="start" textLength="55" lengthAdjust="spacing" >Window</text>
<rect x="437.4" y="50.3" width="13.6" height="1.4" fill="#222" />
<text x="516.2" y="48.8" font-family='"Liberation Sans", sans-serif' font-size="15" font-weight="normal" fill="#111" text-anchor="start" textLength="31" lengthAdjust="spacing" >Help</text>
<rect x="516.2" y="50.3" width="10.4" height="1.4" fill="#222" />
<rect x="2475" y="46" width="8.7" height="2.9" fill="#000" />
<rect x="2498.2" y="42" width="7.6" height="6" fill="#eef2f9" stroke="#000" stroke-width="1.5"/><rect x="2497.6" y="41.4" width="8.8" height="2.2" fill="#000"/>
<path d="M2501.2 41 L2501.2 39 L2508 39 L2508 44 L2506.6 44" fill="none" stroke="#000" stroke-width="1.5"/><rect x="2500.5" y="38.2" width="8.3" height="2.2" fill="#000"/>
<path d="M2523.6 39.2 L2531.8 47 M2531.8 39.2 L2523.6 47" stroke="#000" stroke-width="2.8" fill="none"/>
<rect x="8" y="150.6" width="249.4" height="28" fill="#ffffff" />
<rect x="8" y="150.6" width="248" height="26.6" fill="#7a7a7a" />
<rect x="10" y="152.6" width="246" height="24.6" fill="#a8a8a8" />
<rect x="11.4" y="154" width="243.2" height="21.6" fill="#ffffff" />
<rect x="234.6" y="154" width="20" height="21.6" fill="#f0f0f0" />
<rect x="234.6" y="154" width="1.4" height="21.6" fill="#fbfbfb" />
<rect x="234.6" y="154" width="20" height="1.2" fill="#fbfbfb" />
<rect x="253" y="154" width="1.6" height="21.6" fill="#8a8a8a" />
<rect x="234.6" y="174.2" width="20" height="1.4" fill="#8a8a8a" />
<path d="M240.6 162.4 L249.4 162.4 L245 167.6 Z" fill="#000"/>
<text x="14" y="171.2" font-family='"DejaVu Sans", "Liberation Sans", sans-serif' font-size="16" font-weight="normal" fill="#000" text-anchor="start" textLength="160" lengthAdjust="spacing" >Red saturation scale</text>
<rect x="270" y="148" width="1479.8" height="33.4" fill="#f0f0f0" />
<rect x="270" y="148" width="1479.8" height="1.2" fill="#fafafa" />
<rect x="270" y="148" width="1.2" height="33.4" fill="#fafafa" />
<rect x="270" y="180.2" width="1479.8" height="1.2" fill="#d9d9d9" />
<rect x="1748.6" y="148" width="1.2" height="33.4" fill="#d9d9d9" />
<text x="272" y="166.6" font-family='"Liberation Sans", sans-serif' font-size="19.4" font-weight="bold" fill="#000" text-anchor="start" textLength="1309" lengthAdjust="spacing" >Color Space: HDTV Rec709 , White Point: D65, EOTF:  SDR, Power law (black compensation) w/gamma = 2.20, # of measures: 0 [13:45:03]</text>
<rect x="1757.4" y="150" width="20" height="15" fill="#f0f0f0" />
<rect x="1757.4" y="150" width="20" height="1.2" fill="#ffffff" />
<rect x="1757.4" y="150" width="1.2" height="15" fill="#ffffff" />
<rect x="1757.4" y="163" width="21" height="2" fill="#747474" />
<rect x="1776.4" y="150" width="2" height="15" fill="#747474" />
<path d="M1764.4 159.3 L1770.4 159.3 L1767.4 155.5 Z" fill="#000"/>
<rect x="1757.4" y="166.8" width="20" height="14.8" fill="#f0f0f0" />
<rect x="1757.4" y="166.8" width="20" height="1.2" fill="#ffffff" />
<rect x="1757.4" y="166.8" width="1.2" height="14.8" fill="#ffffff" />
<rect x="1757.4" y="179.6" width="21" height="2" fill="#747474" />
<rect x="1776.4" y="166.8" width="2" height="14.8" fill="#747474" />
<path d="M1764.4 172.4 L1770.4 172.4 L1767.4 176.2 Z" fill="#000"/>
<rect x="1802" y="147.2" width="368" height="16.8" fill="#f0f0f0" />
<text x="1805" y="161.6" font-family='"DejaVu Sans", "Liberation Sans", sans-serif' font-size="16" font-weight="normal" fill="#000" text-anchor="start" textLength="136" lengthAdjust="spacing" >Simulated sensor</text>
<rect x="1805" y="168.4" width="85" height="18" fill="#f0f0f0" />
<text x="1807" y="182.6" font-family='"DejaVu Sans", "Liberation Sans", sans-serif' font-size="16" font-weight="normal" fill="#000" text-anchor="start" textLength="69" lengthAdjust="spacing" >Adaptive</text>
<path d="M1940.4 170.2 L1955.4 177.6 L1940.4 185 Z" fill="#6fdc62" stroke="#58c84c" stroke-width="0.8"/>
<rect x="2189" y="147.2" width="131" height="17.4" fill="#f0f0f0" />
<text x="2190.4" y="161.2" font-family='"DejaVu Sans", "Liberation Sans", sans-serif' font-size="16" font-weight="normal" fill="#000" text-anchor="start" textLength="94.6" lengthAdjust="spacing" >DVD manual</text>
<rect x="2349" y="148" width="123" height="18" fill="#f0f0f0" />
<rect x="2349" y="168" width="166" height="19" fill="#f0f0f0" />
<rect x="2353" y="150" width="14" height="13.6" fill="#ffffff" />
<rect x="2353" y="150" width="14" height="1.8" fill="#7a7a7a" />
<rect x="2353" y="150" width="1.8" height="13.6" fill="#7a7a7a" />
<rect x="2353" y="162.6" width="14" height="1" fill="#fcfcfc" />
<rect x="2366" y="150" width="1" height="13.6" fill="#fcfcfc" />
<text x="2376.4" y="162.4" font-family='"DejaVu Sans", "Liberation Sans", sans-serif' font-size="16" font-weight="normal" fill="#000" text-anchor="start" textLength="78.6" lengthAdjust="spacing" >Reference</text>
<rect x="2353" y="171.2" width="14" height="13.6" fill="#f0f0f0" />
<rect x="2353" y="171.2" width="14" height="1.8" fill="#7a7a7a" />
<rect x="2353" y="171.2" width="1.8" height="13.6" fill="#7a7a7a" />
<rect x="2353" y="183.8" width="14" height="1" fill="#fcfcfc" />
<rect x="2366" y="171.2" width="1" height="13.6" fill="#fcfcfc" />
<text x="2377.4" y="184.6" font-family='"DejaVu Sans", "Liberation Sans", sans-serif' font-size="16" font-weight="normal" fill="#ffffff" text-anchor="start" textLength="123.6" lengthAdjust="spacing" >XYZ Adjustment</text>
<text x="2376.4" y="183.6" font-family='"DejaVu Sans", "Liberation Sans", sans-serif' font-size="16" font-weight="normal" fill="#a0a0a0" text-anchor="start" textLength="123.6" lengthAdjust="spacing" >XYZ Adjustment</text>
<!-- p6_bottom -->
<rect x="0" y="1391.6" width="2560" height="25.4" fill="#f0f0f0" />
<rect x="0" y="1390.4" width="2560" height="1.2" fill="#fbfbfb" />
<rect x="67" y="1392.2" width="2493" height="1.9" fill="#2c2c2c" />
<rect x="0" y="1392.7" width="67" height="23.3" fill="#111111" />
<rect x="0.2" y="1394.8" width="21.4" height="18.8" fill="#808080" />
<rect x="0.2" y="1394.8" width="19.6" height="17.2" fill="#fdfdfd" />
<rect x="1.6" y="1396" width="18.2" height="16" fill="#f0f0f0" />
<rect x="21.8" y="1394.8" width="21.4" height="18.8" fill="#808080" />
<rect x="21.8" y="1394.8" width="19.6" height="17.2" fill="#fdfdfd" />
<rect x="23.2" y="1396" width="18.2" height="16" fill="#f0f0f0" />
<rect x="43.4" y="1394.8" width="21.4" height="18.8" fill="#808080" />
<rect x="43.4" y="1394.8" width="19.6" height="17.2" fill="#fdfdfd" />
<rect x="44.8" y="1396" width="18.2" height="16" fill="#f0f0f0" />
<path d="M7.2 1400.4 L17.2 1408.6 M17.2 1400.4 L7.2 1408.6" stroke="#000" stroke-width="2" fill="none"/>
<path d="M35.2 1400 L30 1404.3 L35.2 1408.6 L33.4 1404.3 Z" fill="#000" stroke="#000" stroke-width="0.8"/>
<path d="M52 1400 L57.2 1404.3 L52 1408.6 L53.8 1404.3 Z" fill="#000" stroke="#000" stroke-width="0.8"/>
<path d="M158.4 1415.2 L234.6 1415.2" stroke="#484848" stroke-width="1.15" fill="none"/>
<path d="M158.4 1415.2 L154 1407" stroke="#484848" stroke-width="1.15" fill="none"/>
<path d="M234.4 1415.2 L239.2 1404" stroke="#484848" stroke-width="1.15" fill="none"/>
<path d="M233.2 1393.6 L243 1415.2" stroke="#484848" stroke-width="1.15" fill="none"/>
<path d="M243 1415.2 L299.2 1415.2" stroke="#484848" stroke-width="1.15" fill="none"/>
<path d="M299 1415.2 L303.4 1404" stroke="#484848" stroke-width="1.15" fill="none"/>
<path d="M298 1393.6 L308.4 1415.2" stroke="#484848" stroke-width="1.15" fill="none"/>
<path d="M308.4 1415.2 L430.4 1415.2" stroke="#484848" stroke-width="1.15" fill="none"/>
<path d="M430.2 1415.2 L440.8 1393.6" stroke="#484848" stroke-width="1.15" fill="none"/>
<path d="M68.2 1391.6 L159.6 1391.6 L149 1415.2 L78.8 1415.2 Z" fill="#ffffff"/>
<path d="M68.2 1392.6 L78.8 1415.2" stroke="#222" stroke-width="1.5" fill="none"/>
<path d="M149 1415.2 L159.6 1392.6" stroke="#222" stroke-width="1.5" fill="none"/>
<text x="83.4" y="1408.1" font-family='"DejaVu Sans", "Liberation Sans", sans-serif' font-size="11.3" font-weight="bold" fill="#000" text-anchor="start" textLength="61.4" lengthAdjust="spacing" >Measures</text>
<text x="167.8" y="1408.1" font-family='"DejaVu Sans Condensed", "DejaVu Sans", sans-serif' font-size="11.2" font-weight="normal" fill="#1c1c2a" text-anchor="start" textLength="55.8" lengthAdjust="spacing" >Luminance</text>
<text x="250" y="1408.1" font-family='"DejaVu Sans Condensed", "DejaVu Sans", sans-serif' font-size="11.2" font-weight="normal" fill="#1c1c2a" text-anchor="start" textLength="40.6" lengthAdjust="spacing" >Gamma</text>
<text x="322.5" y="1408.1" font-family='"DejaVu Sans Condensed", "DejaVu Sans", sans-serif' font-size="11.2" font-weight="normal" fill="#1c1c2a" text-anchor="start" textLength="92.4" lengthAdjust="spacing" >Color temperature</text>
<polygon points="2350,1404.4 2358.8,1404.4 2356.6,1409.4 2355.8,1412 2352.6,1412 2351.8,1409.4" fill="#808000" stroke="#000" stroke-width="1.3" stroke-linejoin="round"/>
<polygon points="2359,1405.4 2365.6,1405.4 2364.4,1409.4 2363.8,1412 2360.6,1412 2360,1409.4" fill="#ffff00" stroke="#000" stroke-width="1.3" stroke-linejoin="round"/>
<rect x="2349.6" y="1395.8" width="16.2" height="9" fill="#808000" stroke="#000" stroke-width="1.3"/>
<rect x="2350.4" y="1404" width="7.8" height="1.6" fill="#808000" />
<path d="M2350.6 1400.6 L2353.4 1397.8 L2353.4 1399 L2355.4 1398.6 L2355.4 1398.2 L2360.8 1398.2 L2360.8 1404.6 L2354.2 1404.6 L2354.2 1401.6 L2353.4 1401.8 L2353.4 1402.6 Z" fill="#ffffff"/>
<path d="M2351.6 1400.4 L2353 1399 L2353 1399.8 L2356 1399.2 L2356 1400.6 L2353 1401 L2353 1401.4 Z" fill="#ff1010"/>
<rect x="2355.2" y="1399.2" width="4.8" height="4.6" fill="#ff0000" />
<rect x="2468" y="1396" width="14.2" height="14" fill="#ffffff" />
<rect x="2468" y="1396" width="14.2" height="1.6" fill="#8a8a8a" />
<rect x="2468" y="1396" width="1.6" height="14" fill="#8a8a8a" />
<text x="2490.6" y="1408.4" font-family='"Liberation Sans", sans-serif' font-size="13.6" font-weight="normal" fill="#111" text-anchor="start" textLength="62" lengthAdjust="spacing" >Reference</text>
<rect x="0" y="1416.6" width="2560" height="21.4" fill="url(#hdr)" />
<rect x="0" y="1416.6" width="2560" height="21.4" fill="#e6edf8" opacity="0.6"/>
<text x="3.3" y="1434.6" font-family='"Liberation Sans", sans-serif' font-size="15.4" font-weight="normal" fill="#222230" text-anchor="start" textLength="39.3" lengthAdjust="spacing" >Ready</text>
<rect x="2337.8" y="1418.2" width="92.8" height="22" fill="none" stroke="#b9cae4" stroke-width="1.3"/>
<rect x="2435" y="1418.2" width="35" height="22" fill="none" stroke="#b9cae4" stroke-width="1.3"/>
<rect x="2474" y="1418.2" width="40.8" height="22" fill="none" stroke="#b9cae4" stroke-width="1.3"/>
<rect x="2519" y="1418.2" width="47" height="22" fill="none" stroke="#b9cae4" stroke-width="1.3"/>
<text x="2438" y="1434.4" font-family='"Liberation Sans", sans-serif' font-size="15" font-weight="normal" fill="#111" text-anchor="start" textLength="27.6" lengthAdjust="spacing" >CAP</text>
<text x="2476.6" y="1434.4" font-family='"Liberation Sans", sans-serif' font-size="15" font-weight="normal" fill="#111" text-anchor="start" textLength="34" lengthAdjust="spacing" >NUM</text>
<rect x="0" y="1438" width="2560" height="2" fill="#161616" />
<!-- p7_icons1 -->
<path d="M24.6 72.4 L39 72.4 L45.6 79 L45.6 99.2 L24.6 99.2 Z" fill="url(#pg)" stroke="#6e84bc" stroke-width="1.5" stroke-linejoin="round"/><path d="M39 72.4 L39 79 L45.6 79 Z" fill="#c9d8fa" stroke="#6e84bc" stroke-width="1.2" stroke-linejoin="round"/>
<path d="M70.6 77.6 Q70 75.4 72.4 75.2 L79 74.6 L82 77.4 L89.6 76.6 Q91.4 76.6 91.6 78.4 L92 97 L72 99.4 Z" fill="#fff2a0" stroke="#dcae30" stroke-width="1.2" stroke-linejoin="round"/>
<path d="M72 99.4 L76.4 86.4 L84 85.2 L87 82.6 L98 81.4 L93.4 96.2 Z" fill="url(#fold)" stroke="#dba418" stroke-width="1.2" stroke-linejoin="round"/>
<path d="M80.6 75.6 Q88.6 72.4 91.6 81.6 L94.6 80.6 L90.6 88.4 L84.4 83.8 L87.6 82.8 Q85.6 77.2 80.6 75.6 Z" fill="url(#garrow)" stroke="#2f9a2f" stroke-width="0.9" stroke-linejoin="round"/>
<path d="M120.4 74.4 L145.8 74.4 L145.8 100.6 L122.6 100.6 L120.4 98.4 Z" fill="#6264c8" stroke="#5050b4" stroke-width="0.8"/>
<rect x="143.2" y="75" width="2.4" height="25.2" fill="#4a4cb0" />
<rect x="124" y="74.2" width="18" height="13.4" fill="#f4f4f4" />
<rect x="126.4" y="77.6" width="13.2" height="1.1" fill="#b8b8b8" />
<rect x="126.4" y="80.6" width="13.2" height="1.1" fill="#b8b8b8" />
<rect x="126.4" y="83.6" width="13.2" height="1.1" fill="#b8b8b8" />
<rect x="127.6" y="91.6" width="11" height="9" fill="url(#cam)" />
<rect x="129" y="92.6" width="3" height="6.6" fill="#3a3ca8" />
<path d="M181 74 L183.2 74.4 L193.6 92 L190.8 93.6 Z" fill="#a4aab6" stroke="#6c7486" stroke-width="0.7"/>
<path d="M196.6 74 L194.4 74.4 L184 92 L186.8 93.6 Z" fill="#c8ccd4" stroke="#6c7486" stroke-width="0.7"/>
<ellipse cx="183" cy="96" rx="3.1" ry="3.9" fill="none" stroke="#1244c4" stroke-width="2.9" transform="rotate(28 183 96)"/>
<ellipse cx="194.8" cy="96" rx="3.1" ry="3.9" fill="none" stroke="#1244c4" stroke-width="2.9" transform="rotate(-28 194.8 96)"/>
<circle cx="188.8" cy="86.6" r="1" fill="#59606e"/>
<path d="M224.8 73.4 L235.2 73.4 L240.2 78.4 L240.2 93.2 L224.8 93.2 Z" fill="url(#pg)" stroke="#7a7ab8" stroke-width="1.5" stroke-linejoin="round"/><path d="M235.2 73.4 L235.2 78.4 L240.2 78.4 Z" fill="#c9d8fa" stroke="#7a7ab8" stroke-width="1.2" stroke-linejoin="round"/>
<path d="M233.4 81.2 L244.4 81.2 L249.4 86.2 L249.4 100.8 L233.4 100.8 Z" fill="url(#pg)" stroke="#7a7ab8" stroke-width="1.5" stroke-linejoin="round"/><path d="M244.4 81.2 L244.4 86.2 L249.4 86.2 Z" fill="#c9d8fa" stroke="#7a7ab8" stroke-width="1.2" stroke-linejoin="round"/>
<rect x="272.8" y="74.6" width="22" height="25.2" rx="3" fill="url(#clipb)" stroke="#dba418" stroke-width="1.2"/>
<path d="M278 78.6 L278 75.6 L280.6 75.6 L281.4 73.2 L285.8 73.2 L286.6 75.6 L289.2 75.6 L289.2 78.6 Z" fill="#9aa6b8" stroke="#6e7c94" stroke-width="0.9"/>
<path d="M281 82.4 L291.8 82.4 L296.8 87.4 L296.8 102 L281 102 Z" fill="url(#pg)" stroke="#7a7ab8" stroke-width="1.5" stroke-linejoin="round"/><path d="M291.8 82.4 L291.8 87.4 L296.8 87.4 Z" fill="#c9d8fa" stroke="#7a7ab8" stroke-width="1.2" stroke-linejoin="round"/>
<path d="M333 83.4 L334.6 74.6 L344.4 73.8 L346.4 83 Z" fill="#ffffff" stroke="#9fb2d8" stroke-width="0.9"/>
<path d="M328.4 90 Q328 85 334 84 L350 83.2 Q356 83.6 356.2 88.6 L356 93.6 Q355 97.6 349.6 97.6 L334 98 Q328.8 97.6 328.4 93.6 Z" fill="url(#prn)" stroke="#6f8fd0" stroke-width="0.9"/>
<path d="M337.8 84.4 L347.8 83.8 L349.4 90.4 L339.4 91.2 Z" fill="#c8ccd2" stroke="#8a8e96" stroke-width="0.7"/>
<path d="M340.6 85.4 L346.6 85 L347.2 87.6 L341.2 88.2 Z" fill="#2a2a2a"/>
<path d="M339.4 95 L352 93.6 L355.6 98.4 L343 101.4 Z" fill="#ffffff" stroke="#78b8e8" stroke-width="1"/>
<path d="M343 101.4 L355.6 98.4 L356.4 99.6 L343.6 102.6 Z" fill="#2a9ad8"/>
<circle cx="400.4" cy="88.4" r="14.4" fill="url(#helpg)" stroke="#8898b8" stroke-width="1.6"/>
<path d="M387.6 86 A13 13 0 0 1 413.2 86 Q400.4 92 387.6 86 Z" fill="#ffffff" opacity="0.16"/>
<text x="400.6" y="97.6" font-family='"Liberation Sans", sans-serif' font-size="26" font-weight="bold" fill="#ffffff" text-anchor="middle" >?</text>
<circle cx="478.7" cy="96.5" r="8.8" fill="url(#sK)"/>
<circle cx="469.6" cy="93.6" r="8" fill="url(#sD)"/>
<circle cx="462.2" cy="89.5" r="7.4" fill="url(#sL)"/>
<circle cx="453.4" cy="88.3" r="6" fill="url(#sW)"/>
<circle cx="453.4" cy="77.8" r="6" fill="url(#sW)"/>
<circle cx="461" cy="72.4" r="5.8" fill="url(#sW)"/>
<circle cx="516.8" cy="76" r="9.5" fill="url(#sR)"/>
<circle cx="505.7" cy="96.5" r="9.7" fill="url(#sG)"/>
<circle cx="526.2" cy="96.5" r="9.7" fill="url(#sB)"/>
<circle cx="553.3" cy="96.1" r="8.8" fill="url(#sR2)"/>
<circle cx="562.7" cy="94.5" r="8.5" fill="url(#sB2)"/>
<circle cx="571.4" cy="89.9" r="7.4" fill="url(#sG2)"/>
<circle cx="579.2" cy="88.3" r="5.8" fill="url(#sC)"/>
<circle cx="578.7" cy="78.5" r="6" fill="url(#sM)"/>
<circle cx="571" cy="71.9" r="5.5" fill="url(#sY)"/>
<circle cx="624.7" cy="98.6" r="8.6" fill="url(#sD)"/>
<circle cx="600.9" cy="99.4" r="7.6" fill="url(#sR2)"/>
<circle cx="609.9" cy="99" r="6.5" fill="url(#sB2)"/>
<circle cx="621" cy="90.8" r="6.6" fill="url(#sG2)"/>
<circle cx="628" cy="83.8" r="5.5" fill="url(#sC)"/>
<circle cx="627.1" cy="76" r="5" fill="url(#sM)"/>
<circle cx="619.3" cy="71.5" r="4.8" fill="url(#sY)"/>
<circle cx="608.3" cy="71.5" r="4.8" fill="url(#sW)"/>
<circle cx="600" cy="75.6" r="5" fill="url(#sD)"/>
<circle cx="599.2" cy="83.8" r="5.6" fill="url(#sW)"/>
<circle cx="606.6" cy="91.2" r="6.6" fill="url(#sL)"/>
<path d="M650.1 75.5 L655.6 72.8 L661.6 72.4 L668.6 69.4 L676 68.9 L676.6 67.6 L680 67.6 L680.6 68.8 L685 68.9 L689.2 71.7 L689.4 93.75 L661.1 103.3 L650.1 98.4 Z" fill="#dcdcdc" stroke="#5c5c5c" stroke-width="1.2" stroke-linejoin="round"/>
<path d="M650.1 75.5 L661.1 78.75 L661.1 103.1 L650.1 98.4 Z" fill="#f6f6f6"/>
<path d="M661.1 78.75 L689.2 71.7 L689.4 93.75 L661.1 103.1 Z" fill="url(#camf)"/>
<path d="M650.1 75.5 L655.6 72.8 L661.6 72.4 L668.6 69.4 L685 68.9 L689.2 71.7 L661.1 78.75 Z" fill="#c9c9c9"/>
<path d="M657 74.2 L665.6 73.2 L666 74.6 L658 75.6 Z" fill="#6a6a6a"/><path d="M679.6 72.6 L686 71.2 L686 72.6 L679.6 74 Z" fill="#6a6a6a"/>
<path d="M652 79.6 L652 95.6 M654.2 80.4 L654.2 96.8 M656.4 81.2 L656.4 98" stroke="#bdbdbd" stroke-width="1" fill="none"/>
<path d="M663.6 82 L663.6 99.6" stroke="#bcbcbc" stroke-width="2" stroke-dasharray="1.4 1.4" fill="none"/>
<path d="M661.1 103.3 L689.4 93.75" stroke="#3c3c3c" stroke-width="1.8" fill="none"/>
<ellipse cx="677.3" cy="86.7" rx="7.6" ry="7.9" fill="#f2f2f2"/>
<ellipse cx="677.3" cy="86.7" rx="6.5" ry="6.8" fill="#5a5a5e"/>
<ellipse cx="677.3" cy="86.7" rx="4" ry="4.3" fill="#3e3e44" stroke="#77777c" stroke-width="0.7"/><ellipse cx="677.3" cy="86.9" rx="2.1" ry="2.3" fill="#1464e4"/>
<path d="M705.4 69.1 L734.7 82.4 L734.7 88.1 L707.6 101.3 L705.4 98.9 Z" fill="#34dc34" stroke="#3cc84a" stroke-width="0.8" stroke-linejoin="round"/>
<path d="M705.4 69.1 L733.4 82.4 L705.4 96.1 Z" fill="url(#playg)"/>
<path d="M705.4 96.1 L733.4 82.4" stroke="#9af09a" stroke-width="0.9" fill="none"/>
<polygon points="2147.8,169.2 2159.8,166.6 2160.4,185.2 2148.6,187.6" fill="#27344e" opacity="0.75"/>
<polygon points="2146.4,168.8 2157.8,166.5 2158.2,183.2 2147,185.6" fill="url(#cfgi)" stroke="#2f6ecc" stroke-width="2.1" stroke-linejoin="round"/>
<polygon points="2145.6,168.5 2158.6,165.8 2158.7,169 2145.7,171.8" fill="#2a68c8"/>
<polyline points="2149.4,176.8 2152,179.6 2155.4,171.2" fill="none" stroke="#dfb43a" stroke-width="1.9" stroke-linejoin="round"/>
<line x1="2156.4" y1="177.4" x2="2164" y2="174.6" stroke="#6c9fe2" stroke-width="2.5"/>
<circle cx="2164.6" cy="174.3" r="1.7" fill="#c9522e"/>
<polygon points="2310.4,170 2322.4,167.4 2323,186 2311.2,188.4" fill="#27344e" opacity="0.75"/>
<polygon points="2309,169.6 2320.4,167.3 2320.8,184 2309.6,186.4" fill="url(#cfgi)" stroke="#2f6ecc" stroke-width="2.1" stroke-linejoin="round"/>
<polygon points="2308.2,169.3 2321.2,166.6 2321.3,169.8 2308.3,172.6" fill="#2a68c8"/>
<polyline points="2312,177.6 2314.6,180.4 2318,172" fill="none" stroke="#dfb43a" stroke-width="1.9" stroke-linejoin="round"/>
<line x1="2319" y1="178.2" x2="2326.6" y2="175.4" stroke="#6c9fe2" stroke-width="2.5"/>
<circle cx="2327.2" cy="175.1" r="1.7" fill="#c9522e"/>
<!-- p8_monitors -->
<rect x="763.3" y="63.4" width="47.3" height="47.4" fill="#ffecc4" stroke="#0c0c8c" stroke-width="1.5"/>
<rect x="819.5" y="63.4" width="47.2" height="47.4" fill="#ffecc4" stroke="#0c0c8c" stroke-width="1.5"/>
<rect x="868.1" y="63.4" width="47.1" height="47.4" fill="#ffecc4" stroke="#0c0c8c" stroke-width="1.5"/>
<rect x="965.9" y="63.4" width="47.1" height="47.4" fill="#ffecc4" stroke="#0c0c8c" stroke-width="1.5"/>
<rect x="866.6" y="63" width="2" height="48.2" fill="#0c0c8c" />
<polygon points="781.6,100.6 792.8,100.6 791.6,103.6 796,106.4 771.2,106.4 776.8,103.6 782.6,103.4" fill="url(#mstand)"/><polygon points="799.6,66.4 803.8,66.6 805.8,68.2 805.8,99.4 804.2,101.2 799.6,101.4" fill="url(#mside)"/><polygon points="770.8,74.2 799.8,66.6 799.8,101.2 767.6,101.2 766.8,96.4 768.8,78.2" fill="url(#mfront)" stroke="#5f6e80" stroke-width="1.1" stroke-linejoin="round"/><polygon points="767.4,95.2 799.4,95.2 799.4,100.8 768,100.8 767.2,97" fill="url(#mbez)"/><rect x="768.8" y="97.6" width="4.4" height="1.4" fill="#4a5868" /><rect x="794" y="97.6" width="5.2" height="1.8" fill="#4a5868" /><rect x="782.6" y="98" width="1.6" height="1" fill="#7a8ea8" /><polygon points="772.4,75.4 798.6,68.8 798.6,94.4 769.4,94.4 770.2,79" fill="#ffffff"/><rect x="772.8" y="79.2" width="5" height="2" fill="#ffe3b4" /><rect x="779.4" y="78.1" width="5" height="2" fill="#ffe3b4" /><rect x="786" y="77" width="5" height="2" fill="#ffe3b4" /><rect x="792.4" y="75.9" width="5" height="2" fill="#ffe3b4" /><rect x="772.8" y="82.8" width="5" height="2" fill="#ffe3b4" /><rect x="779.4" y="81.7" width="5" height="2" fill="#ffe3b4" /><rect x="786" y="80.6" width="5" height="2" fill="#ffe3b4" /><rect x="792.4" y="79.5" width="5" height="2" fill="#ffe3b4" /><rect x="772.8" y="86.4" width="5" height="2" fill="#ffe3b4" /><rect x="779.4" y="85.3" width="5" height="2" fill="#ffe3b4" /><rect x="786" y="84.2" width="5" height="2" fill="#ffe3b4" /><rect x="792.4" y="83.1" width="5" height="2" fill="#ffe3b4" /><rect x="772.8" y="90" width="5" height="2" fill="#ffe3b4" /><rect x="779.4" y="88.9" width="5" height="2" fill="#ffe3b4" /><rect x="786" y="87.8" width="5" height="2" fill="#ffe3b4" /><rect x="792.4" y="86.7" width="5" height="2" fill="#ffe3b4" />
<polygon points="838.7,100.6 849.9,100.6 848.7,103.6 853.1,106.4 828.3,106.4 833.9,103.6 839.7,103.4" fill="url(#mstand)"/><polygon points="856.7,66.4 860.9,66.6 862.9,68.2 862.9,99.4 861.3,101.2 856.7,101.4" fill="url(#mside)"/><polygon points="827.9,74.2 856.9,66.6 856.9,101.2 824.7,101.2 823.9,96.4 825.9,78.2" fill="url(#mfront)" stroke="#5f6e80" stroke-width="1.1" stroke-linejoin="round"/><polygon points="824.5,95.2 856.5,95.2 856.5,100.8 825.1,100.8 824.3,97" fill="url(#mbez)"/><rect x="825.9" y="97.6" width="4.4" height="1.4" fill="#4a5868" /><rect x="851.1" y="97.6" width="5.2" height="1.8" fill="#4a5868" /><rect x="839.7" y="98" width="1.6" height="1" fill="#7a8ea8" /><polygon points="829.5,75.4 855.7,68.8 855.7,94.4 826.5,94.4 827.3,79" fill="#ffffff"/><polyline fill="none" stroke="#d6d000" stroke-width="1.7" stroke-linejoin="round" stroke-linecap="round"  points="828.9,93 833.3,91.8 838.3,90 843.3,86.8 847.7,82.4 850.9,78 852.7,73.6"/>
<polygon points="887.3,100.6 898.5,100.6 897.3,103.6 901.7,106.4 876.9,106.4 882.5,103.6 888.3,103.4" fill="url(#mstand)"/><polygon points="905.3,66.4 909.5,66.6 911.5,68.2 911.5,99.4 909.9,101.2 905.3,101.4" fill="url(#mside)"/><polygon points="876.5,74.2 905.5,66.6 905.5,101.2 873.3,101.2 872.5,96.4 874.5,78.2" fill="url(#mfront)" stroke="#5f6e80" stroke-width="1.1" stroke-linejoin="round"/><polygon points="873.1,95.2 905.1,95.2 905.1,100.8 873.7,100.8 872.9,97" fill="url(#mbez)"/><rect x="874.5" y="97.6" width="4.4" height="1.4" fill="#4a5868" /><rect x="899.7" y="97.6" width="5.2" height="1.8" fill="#4a5868" /><rect x="888.3" y="98" width="1.6" height="1" fill="#7a8ea8" /><polygon points="878.1,75.4 904.3,68.8 904.3,94.4 875.1,94.4 875.9,79" fill="#ffffff"/><polyline fill="none" stroke="#d6d000" stroke-width="1.7" stroke-linejoin="round" stroke-linecap="round"  points="882.3,86 886.3,83.2 889.9,84.4 893.9,87 897.5,85.4 900.9,83"/>
<polygon points="935.8,100.6 947,100.6 945.8,103.6 950.2,106.4 925.4,106.4 931,103.6 936.8,103.4" fill="url(#mstand)"/><polygon points="953.8,66.4 958,66.6 960,68.2 960,99.4 958.4,101.2 953.8,101.4" fill="url(#mside)"/><polygon points="925,74.2 954,66.6 954,101.2 921.8,101.2 921,96.4 923,78.2" fill="url(#mfront)" stroke="#5f6e80" stroke-width="1.1" stroke-linejoin="round"/><polygon points="921.6,95.2 953.6,95.2 953.6,100.8 922.2,100.8 921.4,97" fill="url(#mbez)"/><rect x="923" y="97.6" width="4.4" height="1.4" fill="#4a5868" /><rect x="948.2" y="97.6" width="5.2" height="1.8" fill="#4a5868" /><rect x="936.8" y="98" width="1.6" height="1" fill="#7a8ea8" /><polygon points="926.6,75.4 952.8,68.8 952.8,94.4 923.6,94.4 924.4,79" fill="#ffffff"/><polyline fill="none" stroke="#0f9f1f" stroke-width="2" stroke-linejoin="round" stroke-linecap="round"  points="925,92 929,84.6 933.4,83 938,84.6 942.4,82.6 946.4,85.6 950.4,83.6 954.4,83.6"/><polyline fill="none" stroke="#1030b0" stroke-width="2" stroke-linejoin="round" stroke-linecap="round"  points="926.4,82.4 930.4,83.4 935.8,88 939.4,85 944.4,88.6 948.8,92.4"/><polyline fill="none" stroke="#ea5a28" stroke-width="2" stroke-linejoin="round" stroke-linecap="round"  points="929.4,80.6 932,77 935,78.6 938,84.4 940.8,77.6 943.4,75.2 948.8,81.6 953.4,79.4"/>
<polygon points="984.4,100.6 995.6,100.6 994.4,103.6 998.8,106.4 974,106.4 979.6,103.6 985.4,103.4" fill="url(#mstand)"/><polygon points="1002.4,66.4 1006.6,66.6 1008.6,68.2 1008.6,99.4 1007,101.2 1002.4,101.4" fill="url(#mside)"/><polygon points="973.6,74.2 1002.6,66.6 1002.6,101.2 970.4,101.2 969.6,96.4 971.6,78.2" fill="url(#mfront)" stroke="#5f6e80" stroke-width="1.1" stroke-linejoin="round"/><polygon points="970.2,95.2 1002.2,95.2 1002.2,100.8 970.8,100.8 970,97" fill="url(#mbez)"/><rect x="971.6" y="97.6" width="4.4" height="1.4" fill="#4a5868" /><rect x="996.8" y="97.6" width="5.2" height="1.8" fill="#4a5868" /><rect x="985.4" y="98" width="1.6" height="1" fill="#7a8ea8" /><polygon points="975.2,75.4 1001.4,68.8 1001.4,94.4 972.2,94.4 973,79" fill="#ffffff"/><polyline fill="none" stroke="#d8d8d8" stroke-width="0.8" stroke-linejoin="round" stroke-linecap="round"  points="974.4,78 974.4,92 1000,92"/><polyline fill="none" stroke="#90e090" stroke-width="0.8" stroke-linejoin="round" stroke-linecap="round" stroke-dasharray="1.5 1.5" points="1000.4,73 1000.4,92"/><polyline fill="none" stroke="#8a78e6" stroke-width="1.5" stroke-linejoin="round" stroke-linecap="round"  points="975.6,78.6 979.6,84 984.6,87.2 991.4,80.8 996,80.2 999.6,79.6"/>
<polygon points="1040.7,100.6 1051.9,100.6 1050.7,103.6 1055.1,106.4 1030.3,106.4 1035.9,103.6 1041.7,103.4" fill="url(#mstand)"/><polygon points="1058.7,66.4 1062.9,66.6 1064.9,68.2 1064.9,99.4 1063.3,101.2 1058.7,101.4" fill="url(#mside)"/><polygon points="1029.9,74.2 1058.9,66.6 1058.9,101.2 1026.7,101.2 1025.9,96.4 1027.9,78.2" fill="url(#mfront)" stroke="#5f6e80" stroke-width="1.1" stroke-linejoin="round"/><polygon points="1026.5,95.2 1058.5,95.2 1058.5,100.8 1027.1,100.8 1026.3,97" fill="url(#mbez)"/><rect x="1027.9" y="97.6" width="4.4" height="1.4" fill="#4a5868" /><rect x="1053.1" y="97.6" width="5.2" height="1.8" fill="#4a5868" /><rect x="1041.7" y="98" width="1.6" height="1" fill="#7a8ea8" /><polygon points="1031.5,75.4 1057.7,68.8 1057.7,94.4 1028.5,94.4 1029.3,79" fill="#ffffff"/><path d="M1037.9 74.4 Q1041.3 74.6 1054.9 88.4 L1040.9 95 Q1035.7 86 1037.9 74.4 Z" fill="url(#cieg)"/><path d="M1037.9 74.4 Q1041.3 74.6 1054.9 88.4 L1040.9 95 Q1035.7 86 1037.9 74.4 Z" fill="url(#cieb)"/><path d="M1040.9 95 L1054.9 88.4 L1044.3 86 Z" fill="#ff20c0" opacity="0.55"/><circle cx="1045.9" cy="87" r="3.6" fill="url(#ciew)"/>
<polygon points="1096.6,100.6 1107.8,100.6 1106.6,103.6 1111,106.4 1086.2,106.4 1091.8,103.6 1097.6,103.4" fill="url(#mstand)"/><polygon points="1114.6,66.4 1118.8,66.6 1120.8,68.2 1120.8,99.4 1119.2,101.2 1114.6,101.4" fill="url(#mside)"/><polygon points="1085.8,74.2 1114.8,66.6 1114.8,101.2 1082.6,101.2 1081.8,96.4 1083.8,78.2" fill="url(#mfront)" stroke="#5f6e80" stroke-width="1.1" stroke-linejoin="round"/><polygon points="1082.4,95.2 1114.4,95.2 1114.4,100.8 1083,100.8 1082.2,97" fill="url(#mbez)"/><rect x="1083.8" y="97.6" width="4.4" height="1.4" fill="#4a5868" /><rect x="1109" y="97.6" width="5.2" height="1.8" fill="#4a5868" /><rect x="1097.6" y="98" width="1.6" height="1" fill="#7a8ea8" /><polygon points="1087.4,75.4 1113.6,68.8 1113.6,94.4 1084.4,94.4 1085.2,79" fill="#ffffff"/><polyline fill="none" stroke="#d6d000" stroke-width="1.7" stroke-linejoin="round" stroke-linecap="round"  points="1086.8,92.8 1093.2,92.8 1094.2,91.6 1098.2,91.6 1099.2,90.4 1103.2,90.4 1104.2,89.2 1108.2,89.2 1109.2,88 1113.2,87.4"/>
<polygon points="1145.6,100.6 1156.8,100.6 1155.6,103.6 1160,106.4 1135.2,106.4 1140.8,103.6 1146.6,103.4" fill="url(#mstand)"/><polygon points="1163.6,66.4 1167.8,66.6 1169.8,68.2 1169.8,99.4 1168.2,101.2 1163.6,101.4" fill="url(#mside)"/><polygon points="1134.8,74.2 1163.8,66.6 1163.8,101.2 1131.6,101.2 1130.8,96.4 1132.8,78.2" fill="url(#mfront)" stroke="#5f6e80" stroke-width="1.1" stroke-linejoin="round"/><polygon points="1131.4,95.2 1163.4,95.2 1163.4,100.8 1132,100.8 1131.2,97" fill="url(#mbez)"/><rect x="1132.8" y="97.6" width="4.4" height="1.4" fill="#4a5868" /><rect x="1158" y="97.6" width="5.2" height="1.8" fill="#4a5868" /><rect x="1146.6" y="98" width="1.6" height="1" fill="#7a8ea8" /><polygon points="1136.4,75.4 1162.6,68.8 1162.6,94.4 1133.4,94.4 1134.2,79" fill="#ffffff"/><polyline fill="none" stroke="#d6d000" stroke-width="1.8" stroke-linejoin="round" stroke-linecap="round"  points="1136.8,83.2 1139.8,83 1143.2,81 1147.2,79.6 1151.2,78 1155.2,76.4 1159.2,74.8 1162.2,73.4"/>
<polygon points="1201.3,100.6 1212.5,100.6 1211.3,103.6 1215.7,106.4 1190.9,106.4 1196.5,103.6 1202.3,103.4" fill="url(#mstand)"/><polygon points="1219.3,66.4 1223.5,66.6 1225.5,68.2 1225.5,99.4 1223.9,101.2 1219.3,101.4" fill="url(#mside)"/><polygon points="1190.5,74.2 1219.5,66.6 1219.5,101.2 1187.3,101.2 1186.5,96.4 1188.5,78.2" fill="url(#mfront)" stroke="#5f6e80" stroke-width="1.1" stroke-linejoin="round"/><polygon points="1187.1,95.2 1219.1,95.2 1219.1,100.8 1187.7,100.8 1186.9,97" fill="url(#mbez)"/><rect x="1188.5" y="97.6" width="4.4" height="1.4" fill="#4a5868" /><rect x="1213.7" y="97.6" width="5.2" height="1.8" fill="#4a5868" /><rect x="1202.3" y="98" width="1.6" height="1" fill="#7a8ea8" /><polygon points="1192.1,75.4 1218.3,68.8 1218.3,94.4 1189.1,94.4 1189.9,79" fill="#ffffff"/><polyline fill="none" stroke="#e4d030" stroke-width="1.5" stroke-linejoin="round" stroke-linecap="round"  points="1190.9,78.4 1195.5,78.4 1196.5,76.6 1204.9,76.6 1205.9,75 1212.9,75 1213.9,73.4 1218.3,73.4"/><polyline fill="none" stroke="#30f0f0" stroke-width="1.5" stroke-linejoin="round" stroke-linecap="round"  points="1190.9,81 1195.5,81 1196.5,79.2 1204.9,79.2 1205.9,77.6 1212.9,77.6 1213.9,76 1218.3,76"/><polyline fill="none" stroke="#30f030" stroke-width="1.5" stroke-linejoin="round" stroke-linecap="round"  points="1190.9,83.6 1195.5,83.6 1196.5,81.8 1204.9,81.8 1205.9,80.2 1212.9,80.2 1213.9,78.6 1218.3,78.6"/><polyline fill="none" stroke="#ff30f0" stroke-width="1.5" stroke-linejoin="round" stroke-linecap="round"  points="1190.9,88.4 1195.5,88.4 1196.5,86.6 1204.9,86.6 1205.9,85 1212.9,85 1213.9,83.4 1218.3,83.4"/><polyline fill="none" stroke="#ff3030" stroke-width="1.5" stroke-linejoin="round" stroke-linecap="round"  points="1190.9,90.6 1195.5,90.6 1196.5,88.8 1204.9,88.8 1205.9,87.2 1212.9,87.2 1213.9,85.6 1218.3,85.6"/><polyline fill="none" stroke="#2020ff" stroke-width="1.5" stroke-linejoin="round" stroke-linecap="round"  points="1190.9,93.2 1195.5,93.2 1196.5,91.4 1204.9,91.4 1205.9,89.8 1212.9,89.8 1213.9,88.2 1218.3,88.2"/>
<polygon points="1250.3,100.6 1261.5,100.6 1260.3,103.6 1264.7,106.4 1239.9,106.4 1245.5,103.6 1251.3,103.4" fill="url(#mstand)"/><polygon points="1268.3,66.4 1272.5,66.6 1274.5,68.2 1274.5,99.4 1272.9,101.2 1268.3,101.4" fill="url(#mside)"/><polygon points="1239.5,74.2 1268.5,66.6 1268.5,101.2 1236.3,101.2 1235.5,96.4 1237.5,78.2" fill="url(#mfront)" stroke="#5f6e80" stroke-width="1.1" stroke-linejoin="round"/><polygon points="1236.1,95.2 1268.1,95.2 1268.1,100.8 1236.7,100.8 1235.9,97" fill="url(#mbez)"/><rect x="1237.5" y="97.6" width="4.4" height="1.4" fill="#4a5868" /><rect x="1262.7" y="97.6" width="5.2" height="1.8" fill="#4a5868" /><rect x="1251.3" y="98" width="1.6" height="1" fill="#7a8ea8" /><polygon points="1241.1,75.4 1267.3,68.8 1267.3,94.4 1238.1,94.4 1238.9,79" fill="#ffffff"/><polyline fill="none" stroke="#1818e0" stroke-width="1.7" stroke-linejoin="round" stroke-linecap="round"  points="1239.5,83.4 1241.5,80.6 1243.9,80.4 1245.9,82 1248.9,80.6 1252.9,78.8 1256.9,78 1258.9,77 1262.5,79 1264.9,76.8 1267.5,78.6"/><polyline fill="none" stroke="#10c020" stroke-width="1.7" stroke-linejoin="round" stroke-linecap="round"  points="1239.9,83.2 1243.5,82.2 1246.5,80.6 1249.9,79.4 1252.9,78.2 1256.5,79.4 1260.5,78.6 1264.5,78.6"/><polyline fill="none" stroke="#f01010" stroke-width="1.7" stroke-linejoin="round" stroke-linecap="round"  points="1239.3,83.4 1240.9,80 1244.5,79.6 1247.9,80.4 1251.3,80.6 1254.9,80.8 1257.3,78 1260.5,79.2 1264.5,79.6 1265.9,78.4"/><polyline fill="none" stroke="#ff18e0" stroke-width="1.7" stroke-linejoin="round" stroke-linecap="round"  points="1239.3,93.2 1241.9,91 1243.9,91.6 1246.9,88.6 1249.5,88.6 1252.9,91.8 1255.9,92 1259.5,89.6 1262.9,89.6 1266.9,92.6"/>
<polygon points="1306.6,100.6 1317.8,100.6 1316.6,103.6 1321,106.4 1296.2,106.4 1301.8,103.6 1307.6,103.4" fill="url(#mstand)"/><polygon points="1324.6,66.4 1328.8,66.6 1330.8,68.2 1330.8,99.4 1329.2,101.2 1324.6,101.4" fill="url(#mside)"/><polygon points="1295.8,74.2 1324.8,66.6 1324.8,101.2 1292.6,101.2 1291.8,96.4 1293.8,78.2" fill="url(#mfront)" stroke="#5f6e80" stroke-width="1.1" stroke-linejoin="round"/><polygon points="1292.4,95.2 1324.4,95.2 1324.4,100.8 1293,100.8 1292.2,97" fill="url(#mbez)"/><rect x="1293.8" y="97.6" width="4.4" height="1.4" fill="#4a5868" /><rect x="1319" y="97.6" width="5.2" height="1.8" fill="#4a5868" /><rect x="1307.6" y="98" width="1.6" height="1" fill="#7a8ea8" /><polygon points="1297.4,75.4 1323.6,68.8 1323.6,94.4 1294.4,94.4 1295.2,79" fill="#2c3038"/><polyline fill="none" stroke="#d8c818" stroke-width="1.8" stroke-linejoin="round" stroke-linecap="round"  points="1297.2,79 1300.2,79 1301.2,77.4 1307.2,77.4 1308.2,75.8 1315.2,75.8 1316.2,74.4 1321.2,74.4 1322.2,73 1323.6,73"/><polyline fill="none" stroke="#1838d0" stroke-width="1.8" stroke-linejoin="round" stroke-linecap="round"  points="1295.8,84.4 1299.2,84.4 1301.2,82.8 1304.2,84 1307.2,82.4 1311.2,84.4 1314.2,82.6 1318.2,82.6 1321.2,81 1323.6,81.6"/><polyline fill="none" stroke="#18b828" stroke-width="1.4" stroke-linejoin="round" stroke-linecap="round"  points="1296.2,85.2 1299.8,83.2 1303.2,84.2 1306.2,83 1309.8,84.8 1313.2,83.2 1317.2,83.8 1320.2,82 1323.6,82.6"/><polyline fill="none" stroke="#f06828" stroke-width="1.2" stroke-linejoin="round" stroke-linecap="round" stroke-dasharray="2.4 1.6" points="1295.8,86.4 1299.2,85 1302.2,82.6 1306.2,81.6 1309.2,83.6 1313.2,81.4 1317.2,83.6 1320.2,80.8 1323.2,79.6"/><polyline fill="none" stroke="#f018d8" stroke-width="1.5" stroke-linejoin="round" stroke-linecap="round"  points="1295.4,89.8 1302.2,89.8 1303.2,88.6 1316.2,88.6 1317.2,87.2 1323.6,87.2"/><polyline fill="none" stroke="#7a68c8" stroke-width="1.6" stroke-linejoin="round" stroke-linecap="round"  points="1296.8,92.6 1309.2,92.6 1310.2,91.4 1323.6,91.4"/>
<!-- p9_btnicons -->
<rect x="2434" y="338" width="37.6" height="25.4" fill="#b2b2b2" />
<path d="M2437 343 h6 v3 h3 v4 h-4 v3 h-5 Z M2437 355 h7 v4 h-7 Z M2462 341 h7 v4 h-4 v4 h5 v5 h-8 Z" fill="#dcdcdc"/>
<path d="M2434 338 V363.4" stroke="#1c1c1c" stroke-width="2.2" stroke-dasharray="2.2 1.6"/>
<path d="M2471.4 340 V366" stroke="#1c1c1c" stroke-width="2.2" stroke-dasharray="2.2 1.6"/>
<rect x="2435.4" y="338" width="1.6" height="25.4" fill="#6a6a6a" />
<rect x="2468.6" y="340" width="1.4" height="25" fill="#6a6a6a" />
<path d="M2441.4 334.2 L2458.6 334.2 Q2458.6 345.6 2464 351.6 L2470.6 357.6 L2465.6 366.3 L2449.6 366.3 Q2447.4 356 2444.4 348.6 Q2441.6 341.6 2441.4 334.2 Z" fill="url(#redfilm)" stroke="#5a0408" stroke-width="1"/>
<path d="M2443 341.6 L2459.4 341 M2447 353.4 L2464.6 351.8 M2449.4 362 L2468 360.4" stroke="#4a0206" stroke-width="1.6" fill="none"/>
<path d="M2444.4 334.6 Q2444.6 344 2449 354 Q2451 360 2452.4 366 M2456 334.6 Q2456.6 346 2462 353.4 L2467.6 359.6" stroke="#4a0206" stroke-width="1.2" fill="none" stroke-dasharray="1.6 1.6"/>
<path d="M2434.6 375.6 Q2451 367.6 2468.8 372.6 L2464.6 396.6 Q2452 404.6 2438.6 399.6 Z" fill="url(#bin)" stroke="#8cc4ee" stroke-width="0.8"/>
<ellipse cx="2451.8" cy="374.4" rx="17" ry="3.6" fill="#e8f6ff" stroke="#9ad0f4" stroke-width="0.8" transform="rotate(-5 2451.8 374.4)"/>
<ellipse cx="2451" cy="396.4" rx="11.4" ry="3.6" fill="none" stroke="#ffffff" stroke-width="1" opacity="0.8"/>
<path d="M2451.4 385.4 A6 6 0 0 1 2461 382.4 L2462.6 380.6 L2463 386.6 L2457.2 386 L2458.8 384.4 A3.4 3.4 0 0 0 2454 386.4 Z" fill="#22a63a"/>
<path d="M2462.8 390 A6 6 0 0 1 2453.2 393 L2451.6 394.8 L2451.2 388.8 L2457 389.4 L2455.4 391 A3.4 3.4 0 0 0 2460.2 389 Z" fill="#22a63a"/>
<rect x="2432.6" y="425.6" width="2.8" height="13.2" fill="#ff10f0" />
<rect x="2435.4" y="423" width="2.2" height="15.8" fill="#7010d0" />
<rect x="2437.6" y="418.6" width="3.4" height="20.2" fill="#1010ff" />
<rect x="2441" y="416.6" width="2.6" height="22.2" fill="#1010ff" />
<rect x="2443.6" y="420.6" width="2.8" height="18.2" fill="#10f0f0" />
<rect x="2446.4" y="422.4" width="2.2" height="16.4" fill="#10f0f0" />
<rect x="2448.6" y="424.4" width="4.8" height="14.4" fill="#10f010" />
<rect x="2453.4" y="417.6" width="2.6" height="21.2" fill="#ffff10" />
<rect x="2456" y="412.6" width="3.6" height="26.2" fill="#ffff10" />
<rect x="2459.6" y="416.4" width="4.4" height="22.4" fill="#901010" />
<rect x="2464" y="423.4" width="4" height="15.4" fill="#ff1010" />
<rect x="2468" y="421.4" width="2" height="17.4" fill="#ff1010" />
<rect x="2470" y="424" width="2.6" height="14.8" fill="#ff1010" />
<polyline fill="none" stroke="#f8f020" stroke-width="1" points="2432.6,425.2 2435.4,425.2 2435.4,422.6 2437.6,422.6 2437.6,418.2 2441,418.2 2441,416.2 2443.6,416.2 2443.6,420.2 2446.4,420.2 2446.4,422 2448.6,422 2448.6,424 2453.4,424"/>
</svg>
<div style="position:absolute;left:62px;top:798px;width:146px;height:111px;box-sizing:border-box;border:1px solid #101040;background:conic-gradient(from 0deg at 50% 50%,#48ff00 0deg,#b0f000 28deg,#ffc000 50deg,#ff6000 66deg,#ff0000 88deg,#ff0060 112deg,#ff00a0 128deg,#c000c0 152deg,#8000c8 180deg,#3000e0 212deg,#0000ff 232deg,#0050d0 252deg,#0090b0 272deg,#00c090 292deg,#00ff60 312deg,#20ff20 340deg,#48ff00 360deg);"></div>
<svg width="160" height="120" viewBox="56 794 160 120" style="left:56px;top:794px">
<rect x="84.6" y="814.6" width="101" height="77.6" rx="10" ry="10" fill="#000" stroke="#fff" stroke-width="1.3"/>
<line x1="82" y1="853.3" x2="190" y2="853.3" stroke="#fff" stroke-width="1.2" stroke-dasharray="3.2 2.4"/>
<line x1="135.2" y1="814" x2="135.2" y2="892.4" stroke="#fff" stroke-width="1.2" stroke-dasharray="3.2 2.4"/>
<ellipse cx="135.2" cy="853.3" rx="27" ry="19" fill="none" stroke="#fff" stroke-width="1.2" stroke-dasharray="3.6 3"/>
</svg>
</div></body></html>
